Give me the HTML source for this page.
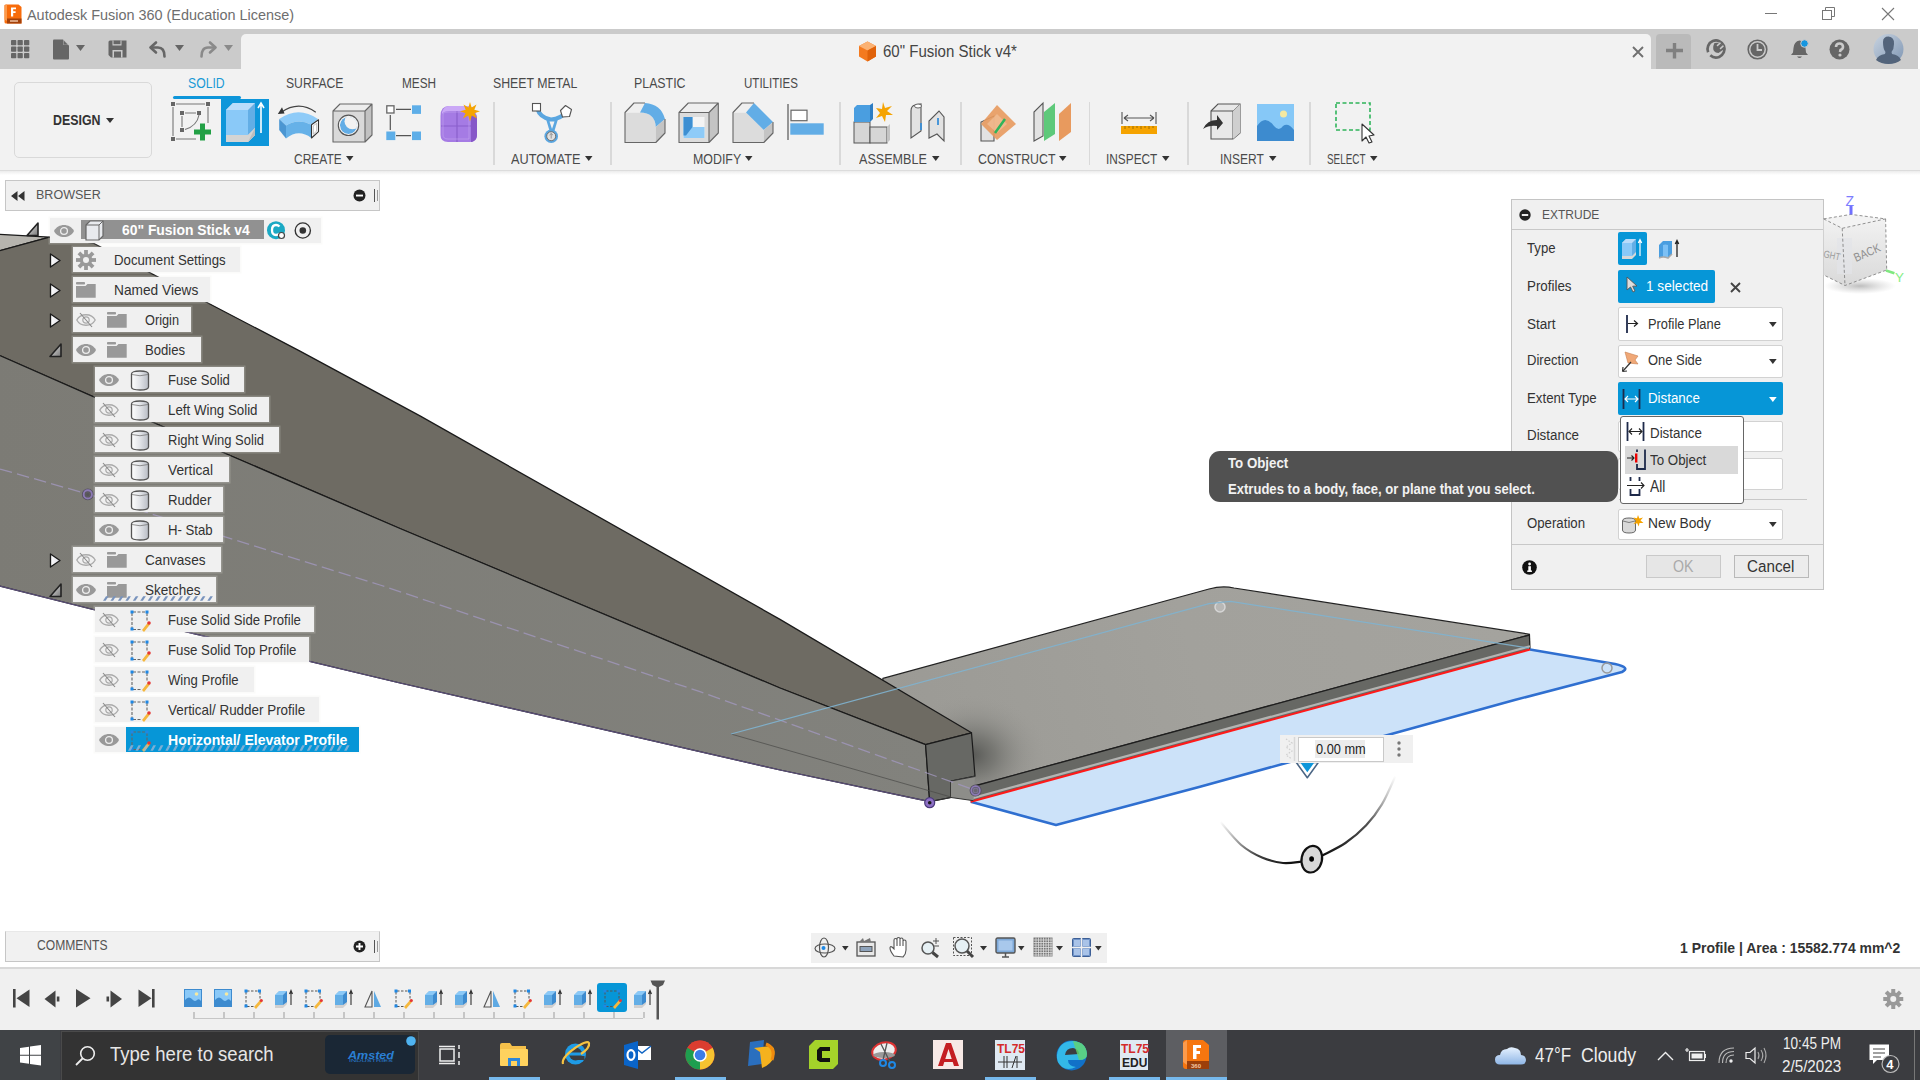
<!DOCTYPE html>
<html><head><meta charset="utf-8">
<style>
*{box-sizing:border-box;margin:0;padding:0}
html,body{width:1920px;height:1080px;overflow:hidden;background:#fff;font-family:"Liberation Sans",sans-serif;color:#333}
.a{position:absolute}
.t{position:absolute;white-space:nowrap;line-height:1}
svg{position:absolute;overflow:visible}
</style></head><body>

<svg class="a" style="left:0;top:0" width="1920" height="1080" viewBox="0 0 1920 1080">
  <defs>
    <linearGradient id="sideG" x1="0" y1="0" x2="1" y2="0">
      <stop offset="0" stop-color="#7c7b75"/><stop offset="1" stop-color="#82827d"/>
    </linearGradient>
    <linearGradient id="stabG" gradientUnits="userSpaceOnUse" x1="900" y1="760" x2="1500" y2="600">
      <stop offset="0" stop-color="#9b9a95"/><stop offset="0.5" stop-color="#a2a19c"/><stop offset="1" stop-color="#a4a39e"/>
    </linearGradient>
    <radialGradient id="shadowG" gradientUnits="userSpaceOnUse" cx="972" cy="755" r="78" gradientTransform="translate(972 755) scale(1 0.8) translate(-972 -755)">
      <stop offset="0" stop-color="#50514e" stop-opacity="0.9"/><stop offset="0.3" stop-color="#60615d" stop-opacity="0.6"/><stop offset="0.65" stop-color="#80807c" stop-opacity="0.25"/><stop offset="1" stop-color="#a19f9a" stop-opacity="0"/>
    </radialGradient>
    <clipPath id="stabClip"><path d="M882.9,678.4 L1209,589 Q1222,585.5 1234,588 L1529.4,634.2 L970.7,787 L880,760 Z"/></clipPath>
    <linearGradient id="arcL" gradientUnits="userSpaceOnUse" x1="1220" y1="822" x2="1290" y2="862">
      <stop offset="0" stop-color="#222" stop-opacity="0"/><stop offset="0.6" stop-color="#222" stop-opacity="0.85"/><stop offset="1" stop-color="#111" stop-opacity="1"/>
    </linearGradient>
    <linearGradient id="arcR" gradientUnits="userSpaceOnUse" x1="1325" y1="855" x2="1396" y2="776">
      <stop offset="0" stop-color="#111" stop-opacity="1"/><stop offset="0.5" stop-color="#333" stop-opacity="0.85"/><stop offset="1" stop-color="#666" stop-opacity="0"/>
    </linearGradient>
  </defs>
  <!-- H-stab top face -->
  <path d="M882.9,678.4 L1209,589 Q1222,585.5 1234,588 L1529.4,634.2 L1529.4,635 L970.7,787 L880,760 Z" fill="url(#stabG)" stroke="#222" stroke-width="1.2"/>
  <g clip-path="url(#stabClip)"><rect x="880" y="680" width="180" height="140" fill="url(#shadowG)"/></g>
  <!-- stab front strip -->
  <path d="M970.7,787 L1529.4,635 L1530,649.5 L970.7,801.7 Z" fill="#676864"/>
  <path d="M970.7,787 L1529.4,635" stroke="#1e1e1e" stroke-width="1.3"/>
  <path d="M1529.4,634.2 L1530,649.5" stroke="#1e1e1e" stroke-width="1.3"/>
  <path d="M970.7,798.6 L1530,646.2" stroke="#b4b4b2" stroke-width="2.2"/>
  <!-- blue profile -->
  <path d="M970.7,801.7 L1530,649.5 L1615,664 Q1631,667.5 1622,672 L1514.6,700 L1200,786.8 L1056,825 Z" fill="#cce2f9"/><path d="M1530,649.5 L1615,664 Q1631,667.5 1622,672 L1514.6,700 L1200,786.8 L1056,825 L970.7,801.7" fill="none" stroke="#2f6fd0" stroke-width="2.6" stroke-linejoin="round"/>
  <path d="M970.7,801.7 L1530,649.5" stroke="#ff1a1a" stroke-width="2.1"/>
  <circle cx="1220" cy="607" r="5" fill="#b8b8b6" stroke="#d6d6d6" stroke-width="1.5"/>
  <circle cx="1607" cy="668" r="5" fill="none" stroke="#9a9a9a" stroke-width="1.5"/>

  <!-- fuselage light top sliver -->
  <path d="M-10,233.8 L49.5,237.2 L-10,253.3 Z" fill="#b6b4ae" stroke="#1a1a1a" stroke-width="1.3"/>
  <!-- fuselage dark face -->
  <path d="M-10,253.3 L49.5,237.2 L93,243 L300,351.1 L420,415.9 L780,619.4 L971.5,732.8 L925.6,744.6 L780,688 L400,528.5 L94.4,397.2 L-10,351.2 Z" fill="#6e6b63" stroke="#1a1a1a" stroke-width="1.3" stroke-linejoin="round"/>
  <!-- fuselage side face -->
  <path d="M-10,351.2 L94.4,397.2 L400,528.5 L780,688 L925.6,744.6 L929.7,801.7 L780,770 L400,683 L95,610 L-10,583.5 Z" fill="url(#sideG)" stroke="#1a1a1a" stroke-width="1.2" stroke-linejoin="round"/>
  <path d="M-10,583.5 L95,610 L400,683 L780,770 L929.7,801.7" fill="none" stroke="#5b4f7a" stroke-width="1.2"/>
  <!-- end face -->
  <path d="M925.6,744.6 L971.5,732.8 L975,776.2 L951,781 L951,797.5 L929.7,801.7 Z" fill="#676864" stroke="#1a1a1a" stroke-width="1.2" stroke-linejoin="round"/>
  <path d="M951,781 L975,776.2 L973.5,800.7 L951,797.5 Z" fill="#8d8d89"/>
  <path d="M951,781 L975,776.5" stroke="#333" stroke-width="1"/>
  <path d="M929.7,801.7 L951,797.5 L973.5,800.7" fill="none" stroke="#333" stroke-width="1"/>
  <!-- sketch plane lines in side face -->
  <path d="M731,734 L951,797" stroke="#4a4a48" stroke-width="1" opacity="0.7"/>
  <path d="M0,469 L87.5,494 L380,585 L700,691.7 L780,720.2 L975.6,790.5" fill="none" stroke="#a197bd" stroke-width="1.3" stroke-dasharray="12.5,5.2" opacity="0.8"/>
  <circle cx="87.8" cy="494.4" r="4.3" fill="#5e5c60" stroke="#55505f" stroke-width="3.2"/><circle cx="87.8" cy="494.4" r="4.1" fill="none" stroke="#8c7ab4" stroke-width="1.9"/><circle cx="87.8" cy="494.4" r="1.5" fill="#555"/>
  <circle cx="929.7" cy="802.7" r="5" fill="#8c6fc4" stroke="#4b3a7a" stroke-width="1.2"/>
  <circle cx="929.7" cy="802.7" r="1.8" fill="#1a1a1a"/>
  <circle cx="975.6" cy="790.5" r="4.5" fill="#7a7490" stroke="#55505f" stroke-width="3"/><circle cx="975.6" cy="790.5" r="4.3" fill="none" stroke="#8c7ab4" stroke-width="1.7"/><circle cx="975.6" cy="790.5" r="1.8" fill="#6a6670"/>
  <path d="M731,734 L1209,603.7 L1230.6,601.3 L1529,648" fill="none" stroke="#7fb2cf" stroke-width="1.2" opacity="0.9"/>

  <!-- arc manipulator -->
  <path d="M1220.4,822.0 C1223.9,825.8 1234.3,839.1 1241.2,845.0 C1248.2,850.9 1255.0,854.5 1262.0,857.5 C1269.0,860.5 1276.5,862.3 1283.0,863.0 C1289.5,863.7 1298.0,861.9 1301.0,861.7" fill="none" stroke="url(#arcL)" stroke-width="2.2"/>
  <path d="M1322.5,855.4 C1326.3,853.3 1338.1,848.0 1345.4,843.0 C1352.7,838.0 1360.2,831.6 1366.2,825.2 C1372.3,818.8 1377.0,812.6 1381.9,804.4 C1386.8,796.2 1393.2,780.9 1395.4,776.2" fill="none" stroke="url(#arcR)" stroke-width="2.2"/>
  <ellipse cx="1311.8" cy="859.2" rx="10.2" ry="13.4" fill="#d8d8d8" stroke="#111" stroke-width="2.2" transform="rotate(12 1311.8 859.2)"/>
  <ellipse cx="1311.6" cy="859" rx="2.4" ry="2.8" fill="#000"/>
  <path d="M1296.3,762.5 L1318.3,762.5 L1307.3,777.8 Z" fill="#fff" stroke="#4a6584" stroke-width="1.5" stroke-linejoin="round"/>
  <path d="M1300.3,762.5 L1314.3,762.5 L1307.3,772.3 Z" fill="#0e96da"/>
</svg>

<svg width="0" height="0" style="position:absolute"><defs><linearGradient id="bodyg" x1="0" y1="0" x2="1" y2="0"><stop offset="0" stop-color="#fff"/><stop offset="0.5" stop-color="#e2e4e8"/><stop offset="1" stop-color="#b8bcc4"/></linearGradient><linearGradient id="trig" x1="0" y1="0" x2="1" y2="1"><stop offset="0" stop-color="#eee"/><stop offset="1" stop-color="#777"/></linearGradient><linearGradient id="trir" x1="0" y1="0" x2="1" y2="0"><stop offset="0" stop-color="#fff"/><stop offset="1" stop-color="#dcdce4"/></linearGradient></defs></svg>
<div class="a" style="left:0px;top:0px;width:1920px;height:29px;background:#ffffff;"></div>
<svg style="left:3px;top:4px" width="19" height="20" viewBox="0 0 19 20">
      <path d="M1.5,1.5 Q1.5,0.5 3,0.5 L15.5,0.5 L18.5,3 L18.5,19.5 L3,19.5 Q1.5,19.5 1.5,18 Z" fill="#f86c0b"/>
      <path d="M1.5,1.5 L4,0.5 L4,17 L1.5,15.5 Z" fill="#fb9a4c"/>
      <rect x="4" y="14.5" width="14.5" height="5" fill="#a3410a"/>
      <path d="M8,3.5 L13,3.5 L13,5.3 L10.2,5.3 L10.2,7.3 L12.6,7.3 L12.6,9 L10.2,9 L10.2,12.5 L8,12.5 Z" fill="#fff"/>
      <rect x="7" y="16.2" width="8" height="1.6" fill="#e8b898"/></svg>
<div class="t" style="left:27.40px;top:6.89px;font-size:15.22px;color:#6e6e6e;transform:scaleX(0.9479);transform-origin:0 0;">Autodesk Fusion 360 (Education License)</div>
<div class="a" style="left:1765px;top:13px;width:12px;height:1px;background:#777;"></div>
<svg style="left:1822px;top:7px" width="14" height="14" viewBox="0 0 14 14"><rect x="0.5" y="3.5" width="9" height="9" fill="none" stroke="#777"/><path d="M3.5,3.5 L3.5,0.5 L12.5,0.5 L12.5,9.5 L9.5,9.5" fill="none" stroke="#777"/></svg>
<svg style="left:1881px;top:7px" width="14" height="14" viewBox="0 0 14 14"><path d="M1,1 L13,13 M13,1 L1,13" stroke="#777" stroke-width="1.1"/></svg>
<div class="a" style="left:0px;top:29px;width:1920px;height:40px;background:#cbcbcb;"></div>
<div class="a" style="left:1918px;top:29px;width:2px;height:40px;background:#ffffff;"></div>
<svg style="left:11px;top:40px" width="19" height="19" viewBox="0 0 19 19"><rect x="0.0" y="0.0" width="5.3" height="5.3" rx="0.8" fill="#666"/><rect x="6.5" y="0.0" width="5.3" height="5.3" rx="0.8" fill="#666"/><rect x="13.0" y="0.0" width="5.3" height="5.3" rx="0.8" fill="#666"/><rect x="0.0" y="6.5" width="5.3" height="5.3" rx="0.8" fill="#666"/><rect x="6.5" y="6.5" width="5.3" height="5.3" rx="0.8" fill="#666"/><rect x="13.0" y="6.5" width="5.3" height="5.3" rx="0.8" fill="#666"/><rect x="0.0" y="13.0" width="5.3" height="5.3" rx="0.8" fill="#666"/><rect x="6.5" y="13.0" width="5.3" height="5.3" rx="0.8" fill="#666"/><rect x="13.0" y="13.0" width="5.3" height="5.3" rx="0.8" fill="#666"/></svg>
<svg style="left:52px;top:39px" width="18" height="21" viewBox="0 0 18 21"><path d="M1,1.5 Q1,0.5 2,0.5 L11,0.5 L17,6.5 L17,19.5 Q17,20.5 16,20.5 L2,20.5 Q1,20.5 1,19.5 Z" fill="#666"/><path d="M11.5,0.5 L11.5,6 L17,6" fill="#cbcbcb"/><path d="M11.8,1.5 L16,5.7 L11.8,5.7 Z" fill="#666"/></svg>
<svg style="left:76px;top:45px" width="9" height="6" viewBox="0 0 9 6"><path d="M0,0 L9,0 L4.5,6 Z" fill="#666"/></svg>
<svg style="left:108px;top:40px" width="19" height="18" viewBox="0 0 19 18"><path d="M0.5,2 Q0.5,0.5 2,0.5 L18.5,0.5 L18.5,17.5 L3,17.5 L0.5,15 Z" fill="#666"/><rect x="4.5" y="0.5" width="9" height="5" fill="#cbcbcb"/><rect x="5.5" y="0.5" width="7" height="3.7" fill="#666"/><rect x="4.5" y="10" width="10" height="7.5" fill="#cbcbcb"/><rect x="6" y="11.5" width="7" height="6" fill="#666"/></svg>
<svg style="left:149px;top:41px" width="18" height="17" viewBox="0 0 18 17"><path d="M7,1.5 L1.5,6.5 L7,11.5" fill="none" stroke="#666" stroke-width="2.6" stroke-linejoin="round" stroke-linecap="round"/><path d="M2,6.5 L9,6.5 Q15.5,6.5 15.5,15.5" fill="none" stroke="#666" stroke-width="2.6" stroke-linecap="round"/></svg>
<svg style="left:175px;top:45px" width="9" height="6" viewBox="0 0 9 6"><path d="M0,0 L9,0 L4.5,6 Z" fill="#666"/></svg>
<svg style="left:199px;top:41px" width="18" height="17" viewBox="0 0 18 17"><path d="M11,1.5 L16.5,6.5 L11,11.5" fill="none" stroke="#8a8a8a" stroke-width="2.6" stroke-linejoin="round" stroke-linecap="round"/><path d="M16,6.5 L9,6.5 Q2.5,6.5 2.5,15.5" fill="none" stroke="#8a8a8a" stroke-width="2.6" stroke-linecap="round"/></svg>
<svg style="left:224px;top:45px" width="9" height="6" viewBox="0 0 9 6"><path d="M0,0 L9,0 L4.5,6 Z" fill="#8a8a8a"/></svg>
<div class="a" style="left:241px;top:34px;width:1410px;height:40px;background:#f2f2f2;border-radius:5px 5px 0 0"></div>
<svg style="left:858px;top:41px" width="19" height="21" viewBox="0 0 19 21"><path d="M9.5,0.5 L18,5 L18,15.5 L9.5,20.5 L1,15.5 L1,5 Z" fill="#f47a1f"/><path d="M9.5,0.5 L18,5 L9.5,9.5 L1,5 Z" fill="#fbb274"/><path d="M9.5,9.5 L18,5 L18,15.5 L9.5,20.5 Z" fill="#e0620a"/></svg>
<div class="t" style="left:883.00px;top:44.47px;font-size:15.65px;color:#454545;transform:scaleX(0.9608);transform-origin:0 0;">60&quot; Fusion Stick v4*</div>
<svg style="left:1632px;top:46px" width="12" height="12" viewBox="0 0 12 12"><path d="M1,1 L11,11 M11,1 L1,11" stroke="#707070" stroke-width="1.9"/></svg>
<div class="a" style="left:1656px;top:34px;width:35px;height:35px;background:#bababa;border-radius:4px 4px 0 0"></div>
<svg style="left:1666px;top:42px" width="17" height="17" viewBox="0 0 17 17"><path d="M8.5,1 V16.5 M0,8.5 H17" stroke="#808080" stroke-width="3.4"/></svg>
<svg style="left:1706px;top:39px" width="21" height="21" viewBox="0 0 21 21"><circle cx="10" cy="10" r="8.5" fill="none" stroke="#666" stroke-width="2.7" stroke-dasharray="49.2 4.2" transform="rotate(158 10 10)"/><path d="M8.5,4 Q14,2.5 17.5,7 L17.5,10.5 L12.5,14 Q9.5,14 8,12 Q6,8.5 8.5,4 Z" fill="#666"/><path d="M11.5,6.5 L14,4.2 M14.5,9.5 L17,7.2" stroke="#cbcbcb" stroke-width="1.6" stroke-linecap="round"/></svg>
<svg style="left:1747px;top:39px" width="21" height="21" viewBox="0 0 21 21"><circle cx="10.5" cy="10.5" r="9.3" fill="none" stroke="#666" stroke-width="1.6"/><circle cx="10.5" cy="10.5" r="7" fill="#666"/><path d="M10.5,5 V11 H15" fill="none" stroke="#cbcbcb" stroke-width="1.8"/></svg>
<svg style="left:1790px;top:39px" width="19" height="21" viewBox="0 0 19 21"><path d="M9.5,1.5 Q4,2.5 3.5,9 L3,13.5 L1,16 L18,16 L16,13.5 L15.5,9 Q15,2.5 9.5,1.5 Z" fill="#666"/><path d="M7,17.5 Q9.5,20.5 12,17.5 Z" fill="#666"/><circle cx="14.5" cy="4.5" r="3.8" fill="#1696e0" stroke="#cbcbcb" stroke-width="1"/></svg>
<svg style="left:1829px;top:39px" width="21" height="21" viewBox="0 0 21 21"><circle cx="10.5" cy="10.5" r="10" fill="#666"/><path d="M7,8 Q7,4.5 10.5,4.5 Q14,4.5 14,7.8 Q14,10 11.5,11 L11,13" fill="none" stroke="#cbcbcb" stroke-width="2.6"/><circle cx="11" cy="16" r="1.6" fill="#cbcbcb"/></svg>
<svg style="left:1873px;top:34px" width="31" height="30" viewBox="0 0 31 30"><defs><linearGradient id="avg" x1="0" y1="0" x2="1" y2="1"><stop offset="0" stop-color="#c8d3e0"/><stop offset="1" stop-color="#7f96b3"/></linearGradient></defs><circle cx="15.5" cy="15" r="15" fill="url(#avg)"/><path d="M10,8 Q10,2.5 15.5,2.5 Q21.5,3 21,10 Q21,15 18.5,18 L19,20 Q26,21 28,26 Q23,30 15.5,30 Q8,30 3,26 Q5,21 12,20 L12.5,18 Q10,15 10,8 Z" fill="#53647b"/></svg>
<div class="a" style="left:0px;top:69px;width:1920px;height:101px;background:#f2f2f2;"></div>
<div class="a" style="left:0px;top:170px;width:1920px;height:1px;background:#dcdcdc;"></div>
<div class="a" style="left:0px;top:171px;width:1920px;height:4px;background:linear-gradient(#ececec,#ffffff);"></div>
<div class="a" style="left:14px;top:82px;width:138px;height:76px;background:#f2f2f2;border:1.5px solid #d9d9d9;border-radius:5px"></div>
<div class="t" style="left:52.50px;top:112.75px;font-size:14.49px;color:#333;font-weight:700;transform:scaleX(0.8557);transform-origin:0 0;">DESIGN</div>
<svg style="left:106px;top:118px" width="8" height="5" viewBox="0 0 8 5"><path d="M0,0 L8,0 L4.0,5 Z" fill="#333"/></svg>
<div class="t" style="left:188.30px;top:75.55px;font-size:14.49px;color:#1a9ad6;transform:scaleX(0.8441);transform-origin:0 0;">SOLID</div>
<div class="t" style="left:285.70px;top:75.55px;font-size:14.49px;color:#4a4a4a;transform:scaleX(0.8391);transform-origin:0 0;">SURFACE</div>
<div class="t" style="left:401.50px;top:75.55px;font-size:14.49px;color:#4a4a4a;transform:scaleX(0.8142);transform-origin:0 0;">MESH</div>
<div class="t" style="left:492.70px;top:75.55px;font-size:14.49px;color:#4a4a4a;transform:scaleX(0.8492);transform-origin:0 0;">SHEET METAL</div>
<div class="t" style="left:634.20px;top:75.55px;font-size:14.49px;color:#4a4a4a;transform:scaleX(0.8538);transform-origin:0 0;">PLASTIC</div>
<div class="t" style="left:744.20px;top:75.55px;font-size:14.49px;color:#4a4a4a;transform:scaleX(0.7964);transform-origin:0 0;">UTILITIES</div>
<div class="a" style="left:173px;top:95.6px;width:68px;height:3.8px;background:#0e96da;border-radius:2px"></div>
<div class="t" style="left:294.30px;top:151.50px;font-size:14.49px;color:#4a4a4a;transform:scaleX(0.8270);transform-origin:0 0;">CREATE</div>
<svg style="left:346.4px;top:156px" width="7.5" height="5" viewBox="0 0 7.5 5"><path d="M0,0 L7.5,0 L3.75,5 Z" fill="#333"/></svg>
<div class="t" style="left:511.30px;top:151.50px;font-size:14.49px;color:#4a4a4a;transform:scaleX(0.8783);transform-origin:0 0;">AUTOMATE</div>
<svg style="left:585px;top:156px" width="7.5" height="5" viewBox="0 0 7.5 5"><path d="M0,0 L7.5,0 L3.75,5 Z" fill="#333"/></svg>
<div class="t" style="left:692.80px;top:151.50px;font-size:14.49px;color:#4a4a4a;transform:scaleX(0.8550);transform-origin:0 0;">MODIFY</div>
<svg style="left:745px;top:156px" width="7.5" height="5" viewBox="0 0 7.5 5"><path d="M0,0 L7.5,0 L3.75,5 Z" fill="#333"/></svg>
<div class="t" style="left:859.00px;top:151.50px;font-size:14.49px;color:#4a4a4a;transform:scaleX(0.8692);transform-origin:0 0;">ASSEMBLE</div>
<svg style="left:932px;top:156px" width="7.5" height="5" viewBox="0 0 7.5 5"><path d="M0,0 L7.5,0 L3.75,5 Z" fill="#333"/></svg>
<div class="t" style="left:977.70px;top:151.50px;font-size:14.49px;color:#4a4a4a;transform:scaleX(0.8515);transform-origin:0 0;">CONSTRUCT</div>
<svg style="left:1059px;top:156px" width="7.5" height="5" viewBox="0 0 7.5 5"><path d="M0,0 L7.5,0 L3.75,5 Z" fill="#333"/></svg>
<div class="t" style="left:1106.00px;top:151.50px;font-size:14.49px;color:#4a4a4a;transform:scaleX(0.8175);transform-origin:0 0;">INSPECT</div>
<svg style="left:1162px;top:156px" width="7.5" height="5" viewBox="0 0 7.5 5"><path d="M0,0 L7.5,0 L3.75,5 Z" fill="#333"/></svg>
<div class="t" style="left:1219.70px;top:151.50px;font-size:14.49px;color:#4a4a4a;transform:scaleX(0.8280);transform-origin:0 0;">INSERT</div>
<svg style="left:1268.7px;top:156px" width="7.5" height="5" viewBox="0 0 7.5 5"><path d="M0,0 L7.5,0 L3.75,5 Z" fill="#333"/></svg>
<div class="t" style="left:1326.50px;top:151.50px;font-size:14.49px;color:#4a4a4a;transform:scaleX(0.6829);transform-origin:0 0;">SELECT</div>
<svg style="left:1370px;top:156px" width="7.5" height="5" viewBox="0 0 7.5 5"><path d="M0,0 L7.5,0 L3.75,5 Z" fill="#333"/></svg>
<div class="a" style="left:493px;top:102px;width:1.5px;height:63px;background:#d9d9d9;"></div>
<div class="a" style="left:610px;top:102px;width:1.5px;height:63px;background:#d9d9d9;"></div>
<div class="a" style="left:839px;top:102px;width:1.5px;height:63px;background:#d9d9d9;"></div>
<div class="a" style="left:960px;top:102px;width:1.5px;height:63px;background:#d9d9d9;"></div>
<div class="a" style="left:1088.5px;top:102px;width:1.5px;height:63px;background:#d9d9d9;"></div>
<div class="a" style="left:1187px;top:102px;width:1.5px;height:63px;background:#d9d9d9;"></div>
<div class="a" style="left:1309px;top:102px;width:1.5px;height:63px;background:#d9d9d9;"></div>
<svg style="left:171px;top:102px" width="41" height="41" viewBox="0 0 41 41"><g fill="#666"><rect x="0" y="0" width="4" height="4"/><rect x="35" y="0" width="4" height="4"/><rect x="0" y="35" width="4" height="4"/>
      <rect x="9" y="9" width="4" height="4"/><rect x="26" y="9" width="4" height="4"/><rect x="9" y="26" width="4" height="4"/></g>
      <path d="M5,2 H34 M2,5 V34 M5,37 H25 M37,5 V21 M14,11 H25 M11,14 V25 M14,27.5 Q26,24 28,13" fill="none" stroke="#777" stroke-width="1.1"/>
      <path d="M23,30 H40 M31.5,21.5 V38.5" stroke="#22a045" stroke-width="5"/></svg>
<div class="a" style="left:221px;top:99px;width:48px;height:47px;background:#0e96da;"></div>
<svg style="left:221px;top:99px" width="48" height="47" viewBox="0 0 48 47"><path d="M5,11 L12,4 L34,4 L34,36 L27,43 L5,43 Z" fill="#d8d8d8"/>
      <path d="M5,11 L12,4 L34,4 L27,11 Z" fill="#b9dcfb"/><path d="M5,11 L27,11 L27,36 L5,36 Z" fill="#8ac9f8"/><path d="M27,11 L34,4 L34,29 L27,36 Z" fill="#63aee6"/>
      <path d="M5,36 L27,36 L34,29 L34,36 L27,43 L5,43 Z" fill="#d4d4d4"/><path d="M27,43 L34,36 L34,29 Z" fill="#bdbdbd"/>
      <path d="M40,34 V6 M37,9 L40,4 L43,9" fill="none" stroke="#fff" stroke-width="1.6"/></svg>
<svg style="left:277px;top:103px" width="44" height="38" viewBox="0 0 44 38"><path d="M4,9.5 Q21.6,-3 38.8,9.2" fill="none" stroke="#444" stroke-width="1.3"/><path d="M0.8,11 L5,4.3 L7.5,10.5 Z" fill="#333"/>
      <path d="M2.2,16 Q21.6,2.4 41,16 L34.25,21.8 Q21.6,14.7 9,22.4 Z" fill="#8ecbf8"/>
      <path d="M9,22.4 Q21.6,14.7 34.25,21.8 L34.25,35 Q21.6,25.5 9,35.5 Z" fill="#66b1e8"/>
      <path d="M2.2,16 L9,22.4 L9,35.5 L2.2,27 Z" fill="#4b96d2"/>
      <path d="M34.5,21.8 L41.5,16.8 L41.5,28.6 L34.5,35 Z" fill="#fff" stroke="#333" stroke-width="1.1" stroke-linejoin="round"/><path d="M36.3,22.8 L39.7,20.3 L39.7,28 L36.3,31.2 Z" fill="none" stroke="#999" stroke-width="0.6"/></svg>
<svg style="left:332px;top:103px" width="41" height="40" viewBox="0 0 41 40"><defs><clipPath id="hc"><circle cx="16.5" cy="22.3" r="8.6"/></clipPath></defs>
      <path d="M1,8 L8,1 L40,1 L40,32 L33,39 L1,39 Z" fill="#d9d9d9"/><path d="M33,8 L40,1 L40,32 L33,39 Z" fill="#c2c2c2"/><path d="M1,8 L33,8 L40,1 L8,1 Z" fill="#ededed"/>
      <path d="M1,8 L8,1 L40,1 L40,32 L33,39 L1,39 Z M1,8 L33,8 L40,1 M33,8 V39" fill="none" stroke="#666" stroke-width="1.1" stroke-linejoin="round"/>
      <circle cx="16.5" cy="22.3" r="10.2" fill="#f2f2f2" stroke="#555" stroke-width="1.1"/>
      <g clip-path="url(#hc)"><circle cx="16.5" cy="22.3" r="8.6" fill="#62ade6"/><circle cx="20.5" cy="18.3" r="8" fill="#f2f2f2"/></g></svg>
<svg style="left:385px;top:104px" width="38" height="34" viewBox="0 0 38 34"><path d="M11,5.3 H26 M5.3,11 V26 M11,31.7 H26" stroke="#555" stroke-width="1.2"/>
      <rect x="1.8" y="1.8" width="7.2" height="7.2" fill="#fff" stroke="#666" stroke-width="1.3"/><rect x="27" y="1.3" width="9" height="8.6" fill="#5eaee8"/><rect x="1.3" y="27.5" width="9" height="8.6" fill="#5eaee8"/><rect x="27" y="27.5" width="9" height="8.6" fill="#5eaee8"/></svg>
<svg style="left:439px;top:102px" width="42" height="42" viewBox="0 0 42 42"><path d="M1.5,14 Q1.5,4 10,4 L27,4 Q35,4 36,10 L38,14 L38,33 Q38,40 31,40 L9,40 Q1.5,40 1.5,33 Z" fill="#a57be4"/>
      <path d="M3,10 Q5,4 10,4 L27,4 Q33,4 35,9 L10,9 Q5,9 3,12 Z" fill="#caa8f6"/>
      <path d="M32,12 L38,16 L38,33 Q38,38 33,40 L32,40 Z" fill="#8758c8"/>
      <path d="M18,9 V40 M2,24 H32" stroke="#8a5fcc" stroke-width="1.2"/>
      <path d="M4,13 Q4,10 9,10 L30,10 L30,37 L9,37 Q4,37 4,33 Z" fill="none" stroke="#c6a8f0" stroke-width="0.8" opacity="0.7"/>
      <path d="M31,0 L32.6,5.5 L37.5,2.5 L35.3,7.8 L41,9.2 L35.5,11.2 L38,16.5 L32.8,13.5 L31,19.5 L29.2,13.5 L24,16.5 L26.5,11.2 L21,9.2 L26.7,7.8 L24.5,2.5 L29.4,5.5 Z" fill="#f5a400"/></svg>
<svg style="left:531px;top:102px" width="42" height="42" viewBox="0 0 42 42"><path d="M6,6 Q9,16 20,17.5 Q30,17 36,9" fill="none" stroke="#5aa6e0" stroke-width="4.2" stroke-linecap="round"/>
      <path d="M15,17 L27,17 L22.5,32 L19.5,32 Z" fill="#5aa6e0"/><path d="M18.5,19.5 L23.5,19.5 L21,27 Z" fill="#f2f2f2"/>
      <rect x="1.5" y="1.5" width="8" height="7.5" fill="#fff" stroke="#555" stroke-width="1.1"/>
      <path d="M34.5,3.5 L40.5,7.5 L38.5,14.5 L31.5,15 L29.5,8.5 Z" fill="#fff" stroke="#555" stroke-width="1.1" stroke-linejoin="round"/>
      <circle cx="20.2" cy="34.2" r="6.8" fill="#5aa6e0"/><circle cx="20.2" cy="34.2" r="4.5" fill="#e0e0e0" stroke="#666" stroke-width="0.9"/><path d="M20.2,31.5 V36.5 M18.5,33 L20.2,31.5 L21.9,33" fill="none" stroke="#777" stroke-width="0.7"/></svg>
<svg style="left:624px;top:102px" width="42" height="42" viewBox="0 0 42 42"><path d="M1,10.5 L16,10.5 Q31,10.5 31.8,25 L31.8,40.5 L1,40.5 Z" fill="#dcdcdc"/><path d="M1,10.5 L10,1 L21,1 L16,10.5 Z" fill="#efefef"/>
      <path d="M21,1 Q37,2 41,17 L31.8,25 Q31,10.5 16,10.5 Z" fill="#62ade6"/><path d="M31.8,25 L41,17 L41,31 L31.8,40.5 Z" fill="#c4c4c4"/>
      <path d="M21,1 L10,1 L1,10.5 L1,40.5 L31.8,40.5 L41,31 L41,17" fill="none" stroke="#666" stroke-width="1.1" stroke-linejoin="round"/></svg>
<svg style="left:678px;top:102px" width="42" height="42" viewBox="0 0 42 42"><path d="M1,10.5 L31,10.5 L31,40.5 L1,40.5 Z" fill="#dcdcdc"/><path d="M1,10.5 L10.3,1 L40.3,1 L31,10.5 Z" fill="#efefef"/><path d="M31,10.5 L40.3,1 L40.3,31 L31,40.5 Z" fill="#c4c4c4"/>
      <path d="M1,10.5 L10.3,1 L40.3,1 L40.3,31 L31,40.5 L1,40.5 Z M1,10.5 L31,10.5 L40.3,1 M31,10.5 V40.5" fill="none" stroke="#666" stroke-width="1.1" stroke-linejoin="round"/>
      <rect x="5.5" y="15" width="21" height="21" fill="#f4f4f4"/><path d="M5.5,36 L5.5,15 L14.5,15 L14.5,25 L26.5,25 L26.5,36 Z" fill="#8ecbf8"/><path d="M5.5,33.5 L5.5,15 L14.5,15 L14.5,25 L8,33.5 Z" fill="#3d8fd2"/></svg>
<svg style="left:732px;top:102px" width="42" height="42" viewBox="0 0 42 42"><path d="M1,10.5 L14,10.5 L31.8,28 L31.8,40.5 L1,40.5 Z" fill="#dcdcdc"/><path d="M1,10.5 L10,1 L22,1 L14,10.5 Z" fill="#efefef"/>
      <path d="M22,1 L41,20 L31.8,28 L14,10.5 Z" fill="#62ade6"/><path d="M31.8,28 L41,20 L41,31 L31.8,40.5 Z" fill="#c4c4c4"/>
      <path d="M22,1 L10,1 L1,10.5 L1,40.5 L31.8,40.5 L41,31 L41,20" fill="none" stroke="#666" stroke-width="1.1" stroke-linejoin="round"/></svg>
<svg style="left:787px;top:103px" width="38" height="38" viewBox="0 0 38 38"><path d="M1,1 V37" stroke="#555" stroke-width="1.2"/><rect x="4" y="7.2" width="16" height="10.5" fill="#fff" stroke="#666" stroke-width="1.2"/><rect x="3.3" y="20.3" width="33.4" height="11.4" fill="#62ade6"/></svg>
<svg style="left:853px;top:102px" width="41" height="42" viewBox="0 0 41 42"><rect x="1" y="20" width="16" height="21" fill="#d6d6d6" stroke="#555" stroke-width="1"/><rect x="17" y="25" width="17" height="16" fill="#d6d6d6" stroke="#555" stroke-width="1"/>
      <path d="M1,6 L4,3 L17,3 L17,20 L1,20 Z" fill="#4a9ee0"/><path d="M17,3 L20,1 L20,17 L17,20 Z" fill="#2d7dc4"/><path d="M34,25 L37,22 L37,38 L34,41 Z" fill="#c4c4c4"/>
      <path d="M30,0 L32,6 L39,4 L34,9 L40,13 L33,13 L32,20 L29,14 L23,16 L27,11 L23,6 L29,7 Z" fill="#f5a300"/></svg>
<svg style="left:909px;top:103px" width="37" height="38" viewBox="0 0 37 38"><path d="M2,35 L2,8 Q2,3 6,2 L12,1 L12,28 Z" fill="#e2e2e2" stroke="#555" stroke-width="1.1"/><ellipse cx="9" cy="3" rx="3.5" ry="2" fill="#fff" stroke="#555" stroke-width="0.9"/>
      <path d="M20,35 L20,18 L30,8 L35,14 L35,38 L28,31 Z" fill="#e2e2e2" stroke="#555" stroke-width="1.1"/><path d="M12,27 V20 M29,15 V22" stroke="#3a8fd8" stroke-width="1.8"/></svg>
<svg style="left:979px;top:103px" width="37" height="38" viewBox="0 0 37 38"><path d="M2,38 L2,19 L15,13 L15,38 Z" fill="#e2e2e2" stroke="#555" stroke-width="1.1"/>
      <path d="M2,21 L18,2 L37,21 L18,37 Z" fill="#e89a5e" opacity="0.9"/><path d="M8,21 L18,11 L28,21 L18,30 Z" fill="#f1c09a" opacity="0.7"/><path d="M16,30 L26,16" stroke="#2fb45a" stroke-width="2.5"/></svg>
<svg style="left:1033px;top:102px" width="39" height="40" viewBox="0 0 39 40"><path d="M1,39 L1,10 L10,1 L10,34 Z" fill="#e2e2e2" stroke="#555" stroke-width="1.1"/><path d="M11,39 L11,10 L22,1 L22,32 Z" fill="#5ec97a"/><path d="M26,39 L26,12 L38,1 L38,30 Z" fill="#e89a5e"/></svg>
<svg style="left:1121px;top:112px" width="36" height="22" viewBox="0 0 36 22"><path d="M1,0 V12 M35,0 V12 M3,6 H33 M3,6 L7,3 M3,6 L7,9 M33,6 L29,3 M33,6 L29,9" fill="none" stroke="#555" stroke-width="1.1"/>
      <rect x="0" y="14" width="36" height="8" fill="#f5a300"/><path d="M4,14 V17 M8,14 V16 M12,14 V17 M16,14 V16 M20,14 V17 M24,14 V16 M28,14 V17 M32,14 V16" stroke="#8a6200" stroke-width="0.8"/></svg>
<svg style="left:1203px;top:103px" width="38" height="37" viewBox="0 0 38 37"><path d="M8,8 L15,1 L37,1 L37,30 L30,36 L8,36 Z" fill="#e8e8e8" stroke="#555" stroke-width="1.1"/><path d="M8,8 L30,8 L37,1 M30,8 V36" fill="none" stroke="#555" stroke-width="1"/><path d="M30,8 L37,1 L37,30 L30,36 Z" fill="#cfcfcf"/>
      <path d="M0,26 Q4,17 14,17 L14,12 L20,20 L14,27 L14,23 Q6,22 0,26 Z" fill="#333"/></svg>
<svg style="left:1257px;top:104px" width="37" height="37" viewBox="0 0 37 37"><rect x="0" y="0" width="37" height="37" fill="#86c8f7"/><path d="M0,37 L0,22 Q8,10 17,22 Q22,28 26,22 Q31,18 37,26 L37,37 Z" fill="#3d8bcf"/><circle cx="26.5" cy="10" r="3.5" fill="#f5e9a0"/></svg>
<svg style="left:1335px;top:102px" width="42" height="41" viewBox="0 0 42 41"><rect x="1" y="1" width="34" height="27" fill="none" stroke="#2fb45a" stroke-width="1.6" stroke-dasharray="4,2.5"/>
      <path d="M27,22 L27,39 L31,35 L34,41 L37,40 L34,34 L39,33 Z" fill="#fff" stroke="#333" stroke-width="1.1" stroke-linejoin="round"/></svg>
<div class="a" style="left:5px;top:180px;width:375px;height:31px;background:#f0f0f0;border:1px solid #c6c6c6"></div>
<svg style="left:11px;top:191px" width="14" height="10" viewBox="0 0 14 10"><path d="M6.5,0 L0,5 L6.5,10 Z M13.5,0 L7,5 L13.5,10 Z" fill="#333"/></svg>
<div class="t" style="left:36.30px;top:188.43px;font-size:13.33px;color:#555;transform:scaleX(0.9400);transform-origin:0 0;">BROWSER</div>
<svg style="left:353px;top:189px" width="13" height="13" viewBox="0 0 13 13"><circle cx="6.5" cy="6.5" r="6" fill="#222"/><rect x="3" y="5.6" width="7" height="1.9" fill="#fff"/></svg>
<div class="a" style="left:374px;top:189px;width:1px;height:13px;background:#555;"></div>
<div class="a" style="left:376.5px;top:190px;width:1px;height:11px;background:#999;"></div>
<svg style="left:26px;top:222px" width="14" height="15" viewBox="0 0 14 15"><path d="M12,1 L12,13.5 L1,13.5 Z" fill="url(#trig)" stroke="#222" stroke-width="1.6" stroke-linejoin="round"/></svg>
<div class="a" style="left:50px;top:217.5px;width:271px;height:25px;background:#f0f0f0;box-shadow:0 0 0 1.5px rgba(235,235,230,0.22)"></div>
<svg style="left:53.7px;top:224.5px" width="20" height="12" viewBox="0 0 20 12"><path d="M0,6 C4,-2 16,-2 20,6 C16,14 4,14 0,6 Z" fill="#999"/><circle cx="10" cy="6" r="3.4" fill="none" stroke="#eee" stroke-width="1.3"/></svg>
<div class="a" style="left:81px;top:219.8px;width:182.5px;height:19.6px;background:#919191;"></div>
<svg style="left:84px;top:219.5px" width="21" height="21" viewBox="0 0 21 21"><path d="M2,5 L6,1 L19,1 L19,16 L15,20 L2,20 Z" fill="#e8eaee" stroke="#666" stroke-width="1.2"/><path d="M2,5 L15,5 L19,1 M15,5 V20" fill="none" stroke="#666" stroke-width="1"/></svg>
<div class="t" style="left:122.20px;top:222.95px;font-size:14.49px;color:#fff;font-weight:700;transform:scaleX(0.9585);transform-origin:0 0;">60&quot; Fusion Stick v4</div>
<svg style="left:267px;top:221px" width="19" height="19" viewBox="0 0 19 19"><circle cx="9" cy="9.2" r="9" fill="#1ba9c4"/><path d="M12.5,5.5 Q11,4 9,4 Q5,4 5,9 Q5,14 9,14 Q11,14 12.5,12.5" fill="none" stroke="#fff" stroke-width="2.3"/><circle cx="14.5" cy="14.5" r="3" fill="#fff" stroke="#444" stroke-width="1.2"/></svg>
<svg style="left:294px;top:222px" width="18" height="18" viewBox="0 0 18 18"><circle cx="8.8" cy="8.5" r="7.6" fill="none" stroke="#333" stroke-width="1.4"/><circle cx="8.8" cy="8.5" r="3.3" fill="#333"/></svg>
<svg style="left:48.5px;top:253px" width="13" height="15" viewBox="0 0 13 15"><path d="M1.5,1 L11,7.5 L1.5,14 Z" fill="url(#trir)" stroke="#1a1a1a" stroke-width="1.35" stroke-linejoin="round"/></svg>
<div class="a" style="left:72.5px;top:247.4px;width:167.1px;height:25px;background:#f0f0f0;box-shadow:0 0 0 1.5px rgba(235,235,230,0.22)"></div>
<svg style="left:76.0px;top:250px" width="20" height="20" viewBox="0 0 20 20"><g transform="translate(10,10)"><circle r="6.3" fill="#999"/><rect x="-1.9" y="-10" width="3.8" height="5" fill="#999" transform="rotate(0)"/><rect x="-1.9" y="-10" width="3.8" height="5" fill="#999" transform="rotate(45)"/><rect x="-1.9" y="-10" width="3.8" height="5" fill="#999" transform="rotate(90)"/><rect x="-1.9" y="-10" width="3.8" height="5" fill="#999" transform="rotate(135)"/><rect x="-1.9" y="-10" width="3.8" height="5" fill="#999" transform="rotate(180)"/><rect x="-1.9" y="-10" width="3.8" height="5" fill="#999" transform="rotate(225)"/><rect x="-1.9" y="-10" width="3.8" height="5" fill="#999" transform="rotate(270)"/><rect x="-1.9" y="-10" width="3.8" height="5" fill="#999" transform="rotate(315)"/><circle r="3" fill="#f0f0f0"/></g></svg>
<div class="t" style="left:113.90px;top:252.88px;font-size:14.13px;color:#333;transform:scaleX(0.9355);transform-origin:0 0;">Document Settings</div>
<svg style="left:48.5px;top:283px" width="13" height="15" viewBox="0 0 13 15"><path d="M1.5,1 L11,7.5 L1.5,14 Z" fill="url(#trir)" stroke="#1a1a1a" stroke-width="1.35" stroke-linejoin="round"/></svg>
<div class="a" style="left:72.5px;top:277.4px;width:137.0px;height:25px;background:#f0f0f0;box-shadow:0 0 0 1.5px rgba(235,235,230,0.22)"></div>
<svg style="left:76.0px;top:281.9px" width="21" height="17" viewBox="0 0 21 17"><rect x="0" y="0" width="9" height="2.5" rx="0.8" fill="#999"/><path d="M0,4 L9.5,4 L11.5,2 L19.7,2 L19.7,15.7 L0,15.7 Z" fill="#999"/></svg>
<div class="t" style="left:113.90px;top:282.88px;font-size:14.13px;color:#333;transform:scaleX(0.9712);transform-origin:0 0;">Named Views</div>
<svg style="left:48.5px;top:313px" width="13" height="15" viewBox="0 0 13 15"><path d="M1.5,1 L11,7.5 L1.5,14 Z" fill="url(#trir)" stroke="#1a1a1a" stroke-width="1.35" stroke-linejoin="round"/></svg>
<div class="a" style="left:72.5px;top:307.4px;width:118.5px;height:25px;background:#f0f0f0;box-shadow:0 0 0 1.5px rgba(235,235,230,0.22)"></div>
<svg style="left:76.2px;top:313.8px" width="20" height="12" viewBox="0 0 20 12"><path d="M0.8,6 C4.5,-1 15.5,-1 19.2,6 C15.5,13 4.5,13 0.8,6 Z" fill="none" stroke="#aaa" stroke-width="1.3"/><circle cx="10" cy="6" r="3.2" fill="none" stroke="#aaa" stroke-width="1.2"/><path d="M4,-1 L16,13" stroke="#888" stroke-width="1.1"/></svg>
<svg style="left:107.2px;top:311.9px" width="21" height="17" viewBox="0 0 21 17"><rect x="0" y="0" width="9" height="2.5" rx="0.8" fill="#999"/><path d="M0,4 L9.5,4 L11.5,2 L19.7,2 L19.7,15.7 L0,15.7 Z" fill="#999"/></svg>
<div class="t" style="left:145.40px;top:312.88px;font-size:14.13px;color:#333;transform:scaleX(0.9012);transform-origin:0 0;">Origin</div>
<svg style="left:49px;top:343px" width="14" height="15" viewBox="0 0 14 15"><path d="M12,1 L12,13.5 L1,13.5 Z" fill="url(#trig)" stroke="#222" stroke-width="1.6" stroke-linejoin="round"/></svg>
<div class="a" style="left:72.5px;top:337.4px;width:128.5px;height:25px;background:#f0f0f0;box-shadow:0 0 0 1.5px rgba(235,235,230,0.22)"></div>
<svg style="left:76.2px;top:343.8px" width="20" height="12" viewBox="0 0 20 12"><path d="M0,6 C4,-2 16,-2 20,6 C16,14 4,14 0,6 Z" fill="#999"/><circle cx="10" cy="6" r="3.4" fill="none" stroke="#eee" stroke-width="1.3"/></svg>
<svg style="left:107.2px;top:341.9px" width="21" height="17" viewBox="0 0 21 17"><rect x="0" y="0" width="9" height="2.5" rx="0.8" fill="#999"/><path d="M0,4 L9.5,4 L11.5,2 L19.7,2 L19.7,15.7 L0,15.7 Z" fill="#999"/></svg>
<div class="t" style="left:145.40px;top:342.88px;font-size:14.13px;color:#333;transform:scaleX(0.9297);transform-origin:0 0;">Bodies</div>
<div class="a" style="left:95px;top:367.4px;width:148.5px;height:25px;background:#f0f0f0;box-shadow:0 0 0 1.5px rgba(235,235,230,0.22)"></div>
<svg style="left:98.7px;top:373.8px" width="20" height="12" viewBox="0 0 20 12"><path d="M0,6 C4,-2 16,-2 20,6 C16,14 4,14 0,6 Z" fill="#999"/><circle cx="10" cy="6" r="3.4" fill="none" stroke="#eee" stroke-width="1.3"/></svg>
<svg style="left:129.7px;top:369.5px" width="20" height="21" viewBox="0 0 20 21"><path d="M1.5,4 Q1.5,1 10,1 Q18.5,1 18.5,4 L18.5,17 Q18.5,20 10,20 Q1.5,20 1.5,17 Z" fill="url(#bodyg)" stroke="#555" stroke-width="1.3"/><path d="M2,4.5 Q10,7 18,4.5" fill="none" stroke="#777" stroke-width="0.8"/></svg>
<div class="t" style="left:167.90px;top:372.88px;font-size:14.13px;color:#333;transform:scaleX(0.9266);transform-origin:0 0;">Fuse Solid</div>
<div class="a" style="left:95px;top:397.4px;width:173.5px;height:25px;background:#f0f0f0;box-shadow:0 0 0 1.5px rgba(235,235,230,0.22)"></div>
<svg style="left:98.7px;top:403.8px" width="20" height="12" viewBox="0 0 20 12"><path d="M0.8,6 C4.5,-1 15.5,-1 19.2,6 C15.5,13 4.5,13 0.8,6 Z" fill="none" stroke="#aaa" stroke-width="1.3"/><circle cx="10" cy="6" r="3.2" fill="none" stroke="#aaa" stroke-width="1.2"/><path d="M4,-1 L16,13" stroke="#888" stroke-width="1.1"/></svg>
<svg style="left:129.7px;top:399.5px" width="20" height="21" viewBox="0 0 20 21"><path d="M1.5,4 Q1.5,1 10,1 Q18.5,1 18.5,4 L18.5,17 Q18.5,20 10,20 Q1.5,20 1.5,17 Z" fill="url(#bodyg)" stroke="#555" stroke-width="1.3"/><path d="M2,4.5 Q10,7 18,4.5" fill="none" stroke="#777" stroke-width="0.8"/></svg>
<div class="t" style="left:167.90px;top:402.88px;font-size:14.13px;color:#333;transform:scaleX(0.9422);transform-origin:0 0;">Left Wing Solid</div>
<div class="a" style="left:95px;top:427.4px;width:184px;height:25px;background:#f0f0f0;box-shadow:0 0 0 1.5px rgba(235,235,230,0.22)"></div>
<svg style="left:98.7px;top:433.8px" width="20" height="12" viewBox="0 0 20 12"><path d="M0.8,6 C4.5,-1 15.5,-1 19.2,6 C15.5,13 4.5,13 0.8,6 Z" fill="none" stroke="#aaa" stroke-width="1.3"/><circle cx="10" cy="6" r="3.2" fill="none" stroke="#aaa" stroke-width="1.2"/><path d="M4,-1 L16,13" stroke="#888" stroke-width="1.1"/></svg>
<svg style="left:129.7px;top:429.5px" width="20" height="21" viewBox="0 0 20 21"><path d="M1.5,4 Q1.5,1 10,1 Q18.5,1 18.5,4 L18.5,17 Q18.5,20 10,20 Q1.5,20 1.5,17 Z" fill="url(#bodyg)" stroke="#555" stroke-width="1.3"/><path d="M2,4.5 Q10,7 18,4.5" fill="none" stroke="#777" stroke-width="0.8"/></svg>
<div class="t" style="left:167.90px;top:432.88px;font-size:14.13px;color:#333;transform:scaleX(0.9193);transform-origin:0 0;">Right Wing Solid</div>
<div class="a" style="left:95px;top:457.4px;width:133.7px;height:25px;background:#f0f0f0;box-shadow:0 0 0 1.5px rgba(235,235,230,0.22)"></div>
<svg style="left:98.7px;top:463.8px" width="20" height="12" viewBox="0 0 20 12"><path d="M0.8,6 C4.5,-1 15.5,-1 19.2,6 C15.5,13 4.5,13 0.8,6 Z" fill="none" stroke="#aaa" stroke-width="1.3"/><circle cx="10" cy="6" r="3.2" fill="none" stroke="#aaa" stroke-width="1.2"/><path d="M4,-1 L16,13" stroke="#888" stroke-width="1.1"/></svg>
<svg style="left:129.7px;top:459.5px" width="20" height="21" viewBox="0 0 20 21"><path d="M1.5,4 Q1.5,1 10,1 Q18.5,1 18.5,4 L18.5,17 Q18.5,20 10,20 Q1.5,20 1.5,17 Z" fill="url(#bodyg)" stroke="#555" stroke-width="1.3"/><path d="M2,4.5 Q10,7 18,4.5" fill="none" stroke="#777" stroke-width="0.8"/></svg>
<div class="t" style="left:167.90px;top:462.88px;font-size:14.13px;color:#333;transform:scaleX(0.9709);transform-origin:0 0;">Vertical</div>
<div class="a" style="left:95px;top:487.4px;width:128.4px;height:25px;background:#f0f0f0;box-shadow:0 0 0 1.5px rgba(235,235,230,0.22)"></div>
<svg style="left:98.7px;top:493.8px" width="20" height="12" viewBox="0 0 20 12"><path d="M0.8,6 C4.5,-1 15.5,-1 19.2,6 C15.5,13 4.5,13 0.8,6 Z" fill="none" stroke="#aaa" stroke-width="1.3"/><circle cx="10" cy="6" r="3.2" fill="none" stroke="#aaa" stroke-width="1.2"/><path d="M4,-1 L16,13" stroke="#888" stroke-width="1.1"/></svg>
<svg style="left:129.7px;top:489.5px" width="20" height="21" viewBox="0 0 20 21"><path d="M1.5,4 Q1.5,1 10,1 Q18.5,1 18.5,4 L18.5,17 Q18.5,20 10,20 Q1.5,20 1.5,17 Z" fill="url(#bodyg)" stroke="#555" stroke-width="1.3"/><path d="M2,4.5 Q10,7 18,4.5" fill="none" stroke="#777" stroke-width="0.8"/></svg>
<div class="t" style="left:167.90px;top:492.88px;font-size:14.13px;color:#333;transform:scaleX(0.9342);transform-origin:0 0;">Rudder</div>
<div class="a" style="left:95px;top:517.4px;width:128.4px;height:25px;background:#f0f0f0;box-shadow:0 0 0 1.5px rgba(235,235,230,0.22)"></div>
<svg style="left:98.7px;top:523.8px" width="20" height="12" viewBox="0 0 20 12"><path d="M0,6 C4,-2 16,-2 20,6 C16,14 4,14 0,6 Z" fill="#999"/><circle cx="10" cy="6" r="3.4" fill="none" stroke="#eee" stroke-width="1.3"/></svg>
<svg style="left:129.7px;top:519.5px" width="20" height="21" viewBox="0 0 20 21"><path d="M1.5,4 Q1.5,1 10,1 Q18.5,1 18.5,4 L18.5,17 Q18.5,20 10,20 Q1.5,20 1.5,17 Z" fill="url(#bodyg)" stroke="#555" stroke-width="1.3"/><path d="M2,4.5 Q10,7 18,4.5" fill="none" stroke="#777" stroke-width="0.8"/></svg>
<div class="t" style="left:167.90px;top:522.88px;font-size:14.13px;color:#333;transform:scaleX(0.9332);transform-origin:0 0;">H- Stab</div>
<svg style="left:48.5px;top:553px" width="13" height="15" viewBox="0 0 13 15"><path d="M1.5,1 L11,7.5 L1.5,14 Z" fill="url(#trir)" stroke="#1a1a1a" stroke-width="1.35" stroke-linejoin="round"/></svg>
<div class="a" style="left:72.5px;top:547.4px;width:148.5px;height:25px;background:#f0f0f0;box-shadow:0 0 0 1.5px rgba(235,235,230,0.22)"></div>
<svg style="left:76.2px;top:553.8px" width="20" height="12" viewBox="0 0 20 12"><path d="M0.8,6 C4.5,-1 15.5,-1 19.2,6 C15.5,13 4.5,13 0.8,6 Z" fill="none" stroke="#aaa" stroke-width="1.3"/><circle cx="10" cy="6" r="3.2" fill="none" stroke="#aaa" stroke-width="1.2"/><path d="M4,-1 L16,13" stroke="#888" stroke-width="1.1"/></svg>
<svg style="left:107.2px;top:551.9px" width="21" height="17" viewBox="0 0 21 17"><rect x="0" y="0" width="9" height="2.5" rx="0.8" fill="#999"/><path d="M0,4 L9.5,4 L11.5,2 L19.7,2 L19.7,15.7 L0,15.7 Z" fill="#999"/></svg>
<div class="t" style="left:145.40px;top:552.88px;font-size:14.13px;color:#333;transform:scaleX(0.9637);transform-origin:0 0;">Canvases</div>
<svg style="left:49px;top:583px" width="14" height="15" viewBox="0 0 14 15"><path d="M12,1 L12,13.5 L1,13.5 Z" fill="url(#trig)" stroke="#222" stroke-width="1.6" stroke-linejoin="round"/></svg>
<div class="a" style="left:72.5px;top:577.4px;width:143.5px;height:25px;background:#f0f0f0;box-shadow:0 0 0 1.5px rgba(235,235,230,0.22)"></div>
<svg style="left:76.2px;top:583.8px" width="20" height="12" viewBox="0 0 20 12"><path d="M0,6 C4,-2 16,-2 20,6 C16,14 4,14 0,6 Z" fill="#999"/><circle cx="10" cy="6" r="3.4" fill="none" stroke="#eee" stroke-width="1.3"/></svg>
<svg style="left:107.2px;top:581.9px" width="21" height="17" viewBox="0 0 21 17"><rect x="0" y="0" width="9" height="2.5" rx="0.8" fill="#999"/><path d="M0,4 L9.5,4 L11.5,2 L19.7,2 L19.7,15.7 L0,15.7 Z" fill="#999"/></svg>
<div class="t" style="left:145.40px;top:582.88px;font-size:14.13px;color:#333;transform:scaleX(0.9574);transform-origin:0 0;">Sketches</div>
<svg style="left:103px;top:595.6px" width="112" height="5" viewBox="0 0 112 5"><path d="M3.0,0.2 L5.6,0.2 L2.6,4.8 L0.0,4.8 Z" fill="#7893bd"/><path d="M10.45,0.2 L13.05,0.2 L10.05,4.8 L7.45,4.8 Z" fill="#7893bd"/><path d="M17.9,0.2 L20.5,0.2 L17.5,4.8 L14.9,4.8 Z" fill="#7893bd"/><path d="M25.35,0.2 L27.950000000000003,0.2 L24.950000000000003,4.8 L22.35,4.8 Z" fill="#7893bd"/><path d="M32.8,0.2 L35.4,0.2 L32.4,4.8 L29.8,4.8 Z" fill="#7893bd"/><path d="M40.25,0.2 L42.85,0.2 L39.85,4.8 L37.25,4.8 Z" fill="#7893bd"/><path d="M47.7,0.2 L50.300000000000004,0.2 L47.300000000000004,4.8 L44.7,4.8 Z" fill="#7893bd"/><path d="M55.15,0.2 L57.75,0.2 L54.75,4.8 L52.15,4.8 Z" fill="#7893bd"/><path d="M62.6,0.2 L65.2,0.2 L62.2,4.8 L59.6,4.8 Z" fill="#7893bd"/><path d="M70.05,0.2 L72.64999999999999,0.2 L69.64999999999999,4.8 L67.05,4.8 Z" fill="#7893bd"/><path d="M77.5,0.2 L80.1,0.2 L77.1,4.8 L74.5,4.8 Z" fill="#7893bd"/><path d="M84.95,0.2 L87.55,0.2 L84.55,4.8 L81.95,4.8 Z" fill="#7893bd"/><path d="M92.4,0.2 L95.0,0.2 L92.0,4.8 L89.4,4.8 Z" fill="#7893bd"/><path d="M99.85000000000001,0.2 L102.45,0.2 L99.45,4.8 L96.85000000000001,4.8 Z" fill="#7893bd"/><path d="M107.3,0.2 L109.89999999999999,0.2 L106.89999999999999,4.8 L104.3,4.8 Z" fill="#7893bd"/></svg>
<div class="a" style="left:95px;top:607.4px;width:218.7px;height:25px;background:#f0f0f0;box-shadow:0 0 0 1.5px rgba(235,235,230,0.22)"></div>
<svg style="left:98.7px;top:613.8px" width="20" height="12" viewBox="0 0 20 12"><path d="M0.8,6 C4.5,-1 15.5,-1 19.2,6 C15.5,13 4.5,13 0.8,6 Z" fill="none" stroke="#aaa" stroke-width="1.3"/><circle cx="10" cy="6" r="3.2" fill="none" stroke="#aaa" stroke-width="1.2"/><path d="M4,-1 L16,13" stroke="#888" stroke-width="1.1"/></svg>
<svg style="left:129.7px;top:609.5px" width="21" height="23" viewBox="0 0 21 23"><path d="M3,2 H16 M2,3 V18 M3,19.5 H12 M17,3 V11" fill="none" stroke="#666" stroke-width="1.1" stroke-dasharray="3,1.5"/><rect x="0.5" y="0.5" width="3" height="3" fill="#1e88e5"/><rect x="15.5" y="0.5" width="3" height="3" fill="#1e88e5"/><rect x="0.5" y="17.5" width="3" height="3" fill="#1e88e5"/><path d="M12,20 L18,12.5 L20,14.5 L14,22 Z" fill="#f5b83d"/><circle cx="19" cy="13" r="1.8" fill="#e53935"/></svg>
<div class="t" style="left:167.90px;top:612.88px;font-size:14.13px;color:#333;transform:scaleX(0.9301);transform-origin:0 0;">Fuse Solid Side Profile</div>
<div class="a" style="left:95px;top:637.4px;width:213.60000000000002px;height:25px;background:#f0f0f0;box-shadow:0 0 0 1.5px rgba(235,235,230,0.22)"></div>
<svg style="left:98.7px;top:643.8px" width="20" height="12" viewBox="0 0 20 12"><path d="M0.8,6 C4.5,-1 15.5,-1 19.2,6 C15.5,13 4.5,13 0.8,6 Z" fill="none" stroke="#aaa" stroke-width="1.3"/><circle cx="10" cy="6" r="3.2" fill="none" stroke="#aaa" stroke-width="1.2"/><path d="M4,-1 L16,13" stroke="#888" stroke-width="1.1"/></svg>
<svg style="left:129.7px;top:639.5px" width="21" height="23" viewBox="0 0 21 23"><path d="M3,2 H16 M2,3 V18 M3,19.5 H12 M17,3 V11" fill="none" stroke="#666" stroke-width="1.1" stroke-dasharray="3,1.5"/><rect x="0.5" y="0.5" width="3" height="3" fill="#1e88e5"/><rect x="15.5" y="0.5" width="3" height="3" fill="#1e88e5"/><rect x="0.5" y="17.5" width="3" height="3" fill="#1e88e5"/><path d="M12,20 L18,12.5 L20,14.5 L14,22 Z" fill="#f5b83d"/><circle cx="19" cy="13" r="1.8" fill="#e53935"/></svg>
<div class="t" style="left:167.90px;top:642.88px;font-size:14.13px;color:#333;transform:scaleX(0.9365);transform-origin:0 0;">Fuse Solid Top Profile</div>
<div class="a" style="left:95px;top:667.4px;width:158.5px;height:25px;background:#f0f0f0;box-shadow:0 0 0 1.5px rgba(235,235,230,0.22)"></div>
<svg style="left:98.7px;top:673.8px" width="20" height="12" viewBox="0 0 20 12"><path d="M0.8,6 C4.5,-1 15.5,-1 19.2,6 C15.5,13 4.5,13 0.8,6 Z" fill="none" stroke="#aaa" stroke-width="1.3"/><circle cx="10" cy="6" r="3.2" fill="none" stroke="#aaa" stroke-width="1.2"/><path d="M4,-1 L16,13" stroke="#888" stroke-width="1.1"/></svg>
<svg style="left:129.7px;top:669.5px" width="21" height="23" viewBox="0 0 21 23"><path d="M3,2 H16 M2,3 V18 M3,19.5 H12 M17,3 V11" fill="none" stroke="#666" stroke-width="1.1" stroke-dasharray="3,1.5"/><rect x="0.5" y="0.5" width="3" height="3" fill="#1e88e5"/><rect x="15.5" y="0.5" width="3" height="3" fill="#1e88e5"/><rect x="0.5" y="17.5" width="3" height="3" fill="#1e88e5"/><path d="M12,20 L18,12.5 L20,14.5 L14,22 Z" fill="#f5b83d"/><circle cx="19" cy="13" r="1.8" fill="#e53935"/></svg>
<div class="t" style="left:167.90px;top:672.88px;font-size:14.13px;color:#333;transform:scaleX(0.9270);transform-origin:0 0;">Wing Profile</div>
<div class="a" style="left:95px;top:697.4px;width:223.75px;height:25px;background:#f0f0f0;box-shadow:0 0 0 1.5px rgba(235,235,230,0.22)"></div>
<svg style="left:98.7px;top:703.8px" width="20" height="12" viewBox="0 0 20 12"><path d="M0.8,6 C4.5,-1 15.5,-1 19.2,6 C15.5,13 4.5,13 0.8,6 Z" fill="none" stroke="#aaa" stroke-width="1.3"/><circle cx="10" cy="6" r="3.2" fill="none" stroke="#aaa" stroke-width="1.2"/><path d="M4,-1 L16,13" stroke="#888" stroke-width="1.1"/></svg>
<svg style="left:129.7px;top:699.5px" width="21" height="23" viewBox="0 0 21 23"><path d="M3,2 H16 M2,3 V18 M3,19.5 H12 M17,3 V11" fill="none" stroke="#666" stroke-width="1.1" stroke-dasharray="3,1.5"/><rect x="0.5" y="0.5" width="3" height="3" fill="#1e88e5"/><rect x="15.5" y="0.5" width="3" height="3" fill="#1e88e5"/><rect x="0.5" y="17.5" width="3" height="3" fill="#1e88e5"/><path d="M12,20 L18,12.5 L20,14.5 L14,22 Z" fill="#f5b83d"/><circle cx="19" cy="13" r="1.8" fill="#e53935"/></svg>
<div class="t" style="left:167.90px;top:702.88px;font-size:14.13px;color:#333;transform:scaleX(0.9498);transform-origin:0 0;">Vertical/ Rudder Profile</div>
<div class="a" style="left:95px;top:727.4px;width:263.8px;height:25px;background:#f0f0f0;box-shadow:0 0 0 1.5px rgba(235,235,230,0.22)"></div>
<div class="a" style="left:126px;top:727.3px;width:232.8px;height:25px;background:#0696d7;"></div>
<svg style="left:98.7px;top:733.8px" width="20" height="12" viewBox="0 0 20 12"><path d="M0,6 C4,-2 16,-2 20,6 C16,14 4,14 0,6 Z" fill="#999"/><circle cx="10" cy="6" r="3.4" fill="none" stroke="#eee" stroke-width="1.3"/></svg>
<svg style="left:129.7px;top:729.5px" width="21" height="23" viewBox="0 0 21 23"><path d="M3,2 H16 M2,3 V18 M3,19.5 H12 M17,3 V11" fill="none" stroke="#666" stroke-width="1.1" stroke-dasharray="3,1.5"/><rect x="0.5" y="0.5" width="3" height="3" fill="#1e88e5"/><rect x="15.5" y="0.5" width="3" height="3" fill="#1e88e5"/><rect x="0.5" y="17.5" width="3" height="3" fill="#1e88e5"/><path d="M12,20 L18,12.5 L20,14.5 L14,22 Z" fill="#f5b83d"/><circle cx="19" cy="13" r="1.8" fill="#e53935"/></svg>
<div class="t" style="left:167.90px;top:732.88px;font-size:14.13px;color:#fff;font-weight:700;transform:scaleX(0.9934);transform-origin:0 0;">Horizontal/ Elevator Profile</div>
<svg style="left:128px;top:744.7px" width="230" height="6" viewBox="0 0 230 6"><path d="M3.0,0.3 L5.6,0.3 L2.6,5.7 L0.0,5.7 Z" fill="#9ab5d4" opacity="0.8"/><path d="M10.45,0.3 L13.05,0.3 L10.05,5.7 L7.45,5.7 Z" fill="#9ab5d4" opacity="0.8"/><path d="M17.9,0.3 L20.5,0.3 L17.5,5.7 L14.9,5.7 Z" fill="#9ab5d4" opacity="0.8"/><path d="M25.35,0.3 L27.950000000000003,0.3 L24.950000000000003,5.7 L22.35,5.7 Z" fill="#9ab5d4" opacity="0.8"/><path d="M32.8,0.3 L35.4,0.3 L32.4,5.7 L29.8,5.7 Z" fill="#9ab5d4" opacity="0.8"/><path d="M40.25,0.3 L42.85,0.3 L39.85,5.7 L37.25,5.7 Z" fill="#9ab5d4" opacity="0.8"/><path d="M47.7,0.3 L50.300000000000004,0.3 L47.300000000000004,5.7 L44.7,5.7 Z" fill="#9ab5d4" opacity="0.8"/><path d="M55.15,0.3 L57.75,0.3 L54.75,5.7 L52.15,5.7 Z" fill="#9ab5d4" opacity="0.8"/><path d="M62.6,0.3 L65.2,0.3 L62.2,5.7 L59.6,5.7 Z" fill="#9ab5d4" opacity="0.8"/><path d="M70.05,0.3 L72.64999999999999,0.3 L69.64999999999999,5.7 L67.05,5.7 Z" fill="#9ab5d4" opacity="0.8"/><path d="M77.5,0.3 L80.1,0.3 L77.1,5.7 L74.5,5.7 Z" fill="#9ab5d4" opacity="0.8"/><path d="M84.95,0.3 L87.55,0.3 L84.55,5.7 L81.95,5.7 Z" fill="#9ab5d4" opacity="0.8"/><path d="M92.4,0.3 L95.0,0.3 L92.0,5.7 L89.4,5.7 Z" fill="#9ab5d4" opacity="0.8"/><path d="M99.85000000000001,0.3 L102.45,0.3 L99.45,5.7 L96.85000000000001,5.7 Z" fill="#9ab5d4" opacity="0.8"/><path d="M107.3,0.3 L109.89999999999999,0.3 L106.89999999999999,5.7 L104.3,5.7 Z" fill="#9ab5d4" opacity="0.8"/><path d="M114.75,0.3 L117.35,0.3 L114.35,5.7 L111.75,5.7 Z" fill="#9ab5d4" opacity="0.8"/><path d="M122.2,0.3 L124.8,0.3 L121.8,5.7 L119.2,5.7 Z" fill="#9ab5d4" opacity="0.8"/><path d="M129.65,0.3 L132.25,0.3 L129.25,5.7 L126.65,5.7 Z" fill="#9ab5d4" opacity="0.8"/><path d="M137.1,0.3 L139.7,0.3 L136.7,5.7 L134.1,5.7 Z" fill="#9ab5d4" opacity="0.8"/><path d="M144.55,0.3 L147.15,0.3 L144.15,5.7 L141.55,5.7 Z" fill="#9ab5d4" opacity="0.8"/><path d="M152.0,0.3 L154.6,0.3 L151.6,5.7 L149.0,5.7 Z" fill="#9ab5d4" opacity="0.8"/><path d="M159.45000000000002,0.3 L162.05,0.3 L159.05,5.7 L156.45000000000002,5.7 Z" fill="#9ab5d4" opacity="0.8"/><path d="M166.9,0.3 L169.5,0.3 L166.5,5.7 L163.9,5.7 Z" fill="#9ab5d4" opacity="0.8"/><path d="M174.35,0.3 L176.95,0.3 L173.95,5.7 L171.35,5.7 Z" fill="#9ab5d4" opacity="0.8"/><path d="M181.8,0.3 L184.4,0.3 L181.4,5.7 L178.8,5.7 Z" fill="#9ab5d4" opacity="0.8"/><path d="M189.25,0.3 L191.85,0.3 L188.85,5.7 L186.25,5.7 Z" fill="#9ab5d4" opacity="0.8"/><path d="M196.70000000000002,0.3 L199.3,0.3 L196.3,5.7 L193.70000000000002,5.7 Z" fill="#9ab5d4" opacity="0.8"/><path d="M204.15,0.3 L206.75,0.3 L203.75,5.7 L201.15,5.7 Z" fill="#9ab5d4" opacity="0.8"/><path d="M211.6,0.3 L214.2,0.3 L211.2,5.7 L208.6,5.7 Z" fill="#9ab5d4" opacity="0.8"/><path d="M219.05,0.3 L221.65,0.3 L218.65,5.7 L216.05,5.7 Z" fill="#9ab5d4" opacity="0.8"/></svg>
<div class="a" style="left:5px;top:931px;width:375px;height:31px;background:#f1f1f1;border:1px solid #c6c6c6;border-top-color:#e8e8e8"></div>
<div class="t" style="left:36.70px;top:939.22px;font-size:13.77px;color:#555;transform:scaleX(0.8783);transform-origin:0 0;">COMMENTS</div>
<svg style="left:353px;top:940px" width="13" height="13" viewBox="0 0 13 13"><circle cx="6.5" cy="6.5" r="6" fill="#222"/><path d="M3,6.5 H10 M6.5,3 V10" stroke="#fff" stroke-width="1.9"/></svg>
<div class="a" style="left:374px;top:940px;width:1px;height:13px;background:#555;"></div>
<div class="a" style="left:376.5px;top:941px;width:1px;height:11px;background:#999;"></div>
<div class="a" style="left:1511px;top:199px;width:313px;height:391px;background:#f0f0f0;border:1px solid #c4c4c4"></div>
<div class="a" style="left:1512px;top:229px;width:311px;height:1px;background:#c8c8c8;"></div>
<svg style="left:1518.5px;top:208.5px" width="12" height="12" viewBox="0 0 12 12"><circle cx="6" cy="6" r="5.7" fill="#222"/><rect x="2.8" y="5.1" width="6.4" height="1.8" fill="#fff"/></svg>
<div class="t" style="left:1541.80px;top:207.69px;font-size:13.62px;color:#555;transform:scaleX(0.8815);transform-origin:0 0;">EXTRUDE</div>
<div class="t" style="left:1527.40px;top:241.14px;font-size:14.93px;color:#333;transform:scaleX(0.8829);transform-origin:0 0;">Type</div>
<div class="t" style="left:1527.40px;top:278.84px;font-size:14.93px;color:#333;transform:scaleX(0.8952);transform-origin:0 0;">Profiles</div>
<div class="t" style="left:1527.40px;top:316.54px;font-size:14.93px;color:#333;transform:scaleX(0.9080);transform-origin:0 0;">Start</div>
<div class="t" style="left:1527.40px;top:353.34px;font-size:14.93px;color:#333;transform:scaleX(0.8768);transform-origin:0 0;">Direction</div>
<div class="t" style="left:1527.40px;top:391.04px;font-size:14.93px;color:#333;transform:scaleX(0.8877);transform-origin:0 0;">Extent Type</div>
<div class="t" style="left:1527.40px;top:428.34px;font-size:14.93px;color:#333;transform:scaleX(0.8955);transform-origin:0 0;">Distance</div>
<div class="t" style="left:1527.40px;top:515.94px;font-size:14.93px;color:#333;transform:scaleX(0.8851);transform-origin:0 0;">Operation</div>
<div class="a" style="left:1617.7px;top:231.8px;width:29.3px;height:33.4px;background:#0696d7;border-radius:2px"></div>
<svg style="left:1620px;top:236px" width="25" height="25" viewBox="0 0 25 25"><path d="M2,7 L6,3 L16,3 L16,19 L12,23 L2,23 Z" fill="#d8d8d8"/><path d="M2,7 L6,3 L16,3 L12,7 Z" fill="#b9dcfb"/><rect x="2" y="7" width="10" height="13" fill="#8ac9f8"/><path d="M12,7 L16,3 L16,16 L12,20 Z" fill="#63aee6"/><path d="M20,20 V5 M18.3,7 L20,3.5 L21.7,7" fill="none" stroke="#fff" stroke-width="1.2"/></svg>
<svg style="left:1658px;top:238.5px" width="23" height="21" viewBox="0 0 23 21"><path d="M1,6 L5,2 L14,2 L14,15 L10,19 Q5,17 1,19 Z" fill="#4a9ee0"/><path d="M5,6 Q7,5 10,6 L10,19 Q7,17 5,18 Z" fill="#7cc0f5"/><path d="M1,19 Q5,17 10,19 L14,15" fill="none" stroke="#aaa" stroke-width="1.5"/><path d="M19,18 V3 M17.3,5 L19,1.5 L20.7,5" fill="none" stroke="#222" stroke-width="1.3"/></svg>
<div class="a" style="left:1617.7px;top:269.5px;width:97.7px;height:33.4px;background:#0696d7;border-radius:2px"></div>
<svg style="left:1626px;top:276px" width="12" height="17" viewBox="0 0 12 17"><path d="M1,1 L1,14 L4.5,11 L7,16 L9,15 L6.7,10.2 L11,10 Z" fill="#ddd" stroke="#555" stroke-width="0.9" stroke-linejoin="round"/></svg>
<div class="t" style="left:1645.50px;top:278.84px;font-size:14.93px;color:#fff;transform:scaleX(0.9138);transform-origin:0 0;">1 selected</div>
<svg style="left:1729.5px;top:281.5px" width="11" height="11" viewBox="0 0 11 11"><path d="M1,1 L10,10 M10,1 L1,10" stroke="#444" stroke-width="1.9"/></svg>
<div class="a" style="left:1618px;top:307.2px;width:165px;height:33.4px;background:#fff;border:1px solid #d2d2d2;border-radius:2px"></div>
<svg style="left:1625px;top:314px" width="15" height="20" viewBox="0 0 15 20"><path d="M2,1 V19" stroke="#1e2a4a" stroke-width="1.8"/><path d="M3,9.5 H12 M9,6.5 L12.5,9.5 L9,12.5" fill="none" stroke="#222" stroke-width="1.2"/></svg>
<div class="t" style="left:1648.00px;top:316.54px;font-size:14.93px;color:#333;transform:scaleX(0.8601);transform-origin:0 0;">Profile Plane</div>
<svg style="left:1768.8px;top:321.5px" width="7.7" height="5" viewBox="0 0 7.7 5"><path d="M0,0 L7.7,0 L3.85,5 Z" fill="#333"/></svg>
<div class="a" style="left:1618px;top:344.8px;width:165px;height:33.4px;background:#fff;border:1px solid #d2d2d2;border-radius:2px"></div>
<svg style="left:1621px;top:351px" width="22" height="22" viewBox="0 0 22 22"><path d="M4,1 L17,5 L14,9 L17,13 L7,12 Z" fill="#f0a877" stroke="#c88050" stroke-width="0.6"/><path d="M2,20 L10,11" stroke="#333" stroke-width="1.2"/><path d="M1.5,20.5 L2,16 M1.5,20.5 L6,20" stroke="#333" stroke-width="1.2"/></svg>
<div class="t" style="left:1648.00px;top:353.34px;font-size:14.93px;color:#333;transform:scaleX(0.8675);transform-origin:0 0;">One Side</div>
<svg style="left:1768.8px;top:359px" width="7.7" height="5" viewBox="0 0 7.7 5"><path d="M0,0 L7.7,0 L3.85,5 Z" fill="#333"/></svg>
<div class="a" style="left:1618px;top:382px;width:165px;height:33.3px;background:#0696d7;border-radius:2px"></div>
<svg style="left:1622px;top:388px" width="20" height="22" viewBox="0 0 20 22"><path d="M1.5,1 V21 M17.5,1 V21" stroke="#1e2a4a" stroke-width="1.8"/><path d="M3,11 H16 M6,8 L3,11 L6,14 M13,8 L16,11 L13,14" fill="none" stroke="#fff" stroke-width="1.1"/></svg>
<div class="t" style="left:1648.20px;top:391.04px;font-size:14.93px;color:#fff;transform:scaleX(0.8921);transform-origin:0 0;">Distance</div>
<svg style="left:1768.8px;top:397px" width="7.7" height="5" viewBox="0 0 7.7 5"><path d="M0,0 L7.7,0 L3.85,5 Z" fill="#fff"/></svg>
<div class="a" style="left:1618px;top:420.8px;width:165px;height:31.2px;background:#fff;border:1px solid #d2d2d2;border-radius:2px"></div>
<div class="a" style="left:1618px;top:458px;width:165px;height:31.5px;background:#fff;border:1px solid #d2d2d2;border-radius:2px"></div>
<div class="a" style="left:1619px;top:498.5px;width:187.5px;height:1px;background:#c8c8c8;"></div>
<div class="a" style="left:1618px;top:508.5px;width:165px;height:31.1px;background:#fff;border:1px solid #d2d2d2;border-radius:2px"></div>
<svg style="left:1621px;top:515px" width="24" height="19" viewBox="0 0 24 19"><path d="M1.5,6 Q1.5,3 8,3 Q14.5,3 14.5,6 L14.5,15 Q14.5,18 8,18 Q1.5,18 1.5,15 Z" fill="#d9d9d9" stroke="#666" stroke-width="1"/><path d="M2,6 Q8,9 14,6" fill="none" stroke="#666" stroke-width="0.8"/><path d="M17,0 L18.3,3.5 L22,2.5 L19.5,5.5 L22.5,8 L18.5,8 L17.7,11.5 L16.2,8.3 L12.5,9 L15,6 L12.5,2.5 L16,3.3 Z" fill="#f5a300"/></svg>
<div class="t" style="left:1648.20px;top:515.94px;font-size:14.93px;color:#333;transform:scaleX(0.9255);transform-origin:0 0;">New Body</div>
<svg style="left:1768.8px;top:522px" width="7.7" height="5" viewBox="0 0 7.7 5"><path d="M0,0 L7.7,0 L3.85,5 Z" fill="#333"/></svg>
<div class="a" style="left:1512px;top:544px;width:311px;height:1px;background:#c8c8c8;"></div>
<svg style="left:1522.3px;top:560.4px" width="15" height="15" viewBox="0 0 15 15"><circle cx="7.5" cy="7.5" r="7.3" fill="#111"/><rect x="6.3" y="6.2" width="2.6" height="5.5" fill="#fff"/><circle cx="7.6" cy="4" r="1.4" fill="#fff"/><rect x="5.2" y="10.5" width="4.8" height="1.4" fill="#fff"/></svg>
<div class="a" style="left:1646.2px;top:555.3px;width:74.4px;height:23px;background:#e6e6e6;border:1px solid #c9c9c9"></div>
<div class="t" style="left:1673.00px;top:558.87px;font-size:15.65px;color:#aaa;transform:scaleX(0.9051);transform-origin:0 0;">OK</div>
<div class="a" style="left:1734.2px;top:555.3px;width:74.4px;height:23px;background:#ececec;border:1px solid #b9b9b9"></div>
<div class="t" style="left:1747.00px;top:558.87px;font-size:15.65px;color:#333;transform:scaleX(0.9717);transform-origin:0 0;">Cancel</div>
<div class="a" style="left:1619.5px;top:415.7px;width:124px;height:88.7px;background:#fff;border:1px solid #666;border-radius:3px"></div>
<div class="a" style="left:1625px;top:446.3px;width:112.7px;height:27.5px;background:#d9d9d9;"></div>
<svg style="left:1626px;top:421px" width="20" height="20" viewBox="0 0 20 20"><path d="M1.5,1 V20 M17.5,1 V20" stroke="#1e2a4a" stroke-width="1.8"/><path d="M3,10.5 H16 M6,7.5 L3,10.5 L6,13.5 M13,7.5 L16,10.5 L13,13.5" fill="none" stroke="#222" stroke-width="1.1"/></svg>
<div class="t" style="left:1650.30px;top:425.02px;font-size:15.36px;color:#333;transform:scaleX(0.8685);transform-origin:0 0;">Distance</div>
<svg style="left:1626px;top:448.5px" width="20" height="21" viewBox="0 0 20 21"><path d="M1,9 H8 M5.5,6.5 L8,9 L5.5,11.5" fill="none" stroke="#222" stroke-width="1.1"/><rect x="9" y="4.5" width="2.4" height="9" fill="#e00"/><path d="M11,0.5 V3 M11,15 V20 H19 V0.5" fill="none" stroke="#1e2a4a" stroke-width="1.8"/></svg>
<div class="t" style="left:1650.30px;top:451.89px;font-size:15.22px;color:#333;transform:scaleX(0.8762);transform-origin:0 0;">To Object</div>
<svg style="left:1626px;top:476px" width="20" height="20" viewBox="0 0 20 20"><path d="M4.5,1 V5 M13.5,1 V5 M4.5,13 V19 H13.5 V13" fill="none" stroke="#1e2a4a" stroke-width="1.8"/><path d="M1,9.5 H18 M15,6.5 L18,9.5 L15,12.5" fill="none" stroke="#222" stroke-width="1.1"/></svg>
<div class="t" style="left:1650.30px;top:479.47px;font-size:15.65px;color:#333;transform:scaleX(0.8806);transform-origin:0 0;">All</div>
<div class="a" style="left:1209.2px;top:451px;width:409px;height:50.5px;background:#515151;border-radius:11px"></div>
<div class="t" style="left:1227.50px;top:457.44px;font-size:13.91px;color:#f2f2f2;font-weight:700;transform:scaleX(0.9546);transform-origin:0 0;">To Object</div>
<div class="t" style="left:1227.50px;top:482.64px;font-size:13.91px;color:#f2f2f2;font-weight:700;transform:scaleX(0.9394);transform-origin:0 0;">Extrudes to a body, face, or plane that you select.</div>
<svg style="left:1815px;top:185px" width="100" height="110" viewBox="0 0 100 110"><g transform="translate(-1815 -185)"><defs><linearGradient id="vcg" gradientUnits="userSpaceOnUse" x1="0" y1="220" x2="0" y2="286"><stop offset="0" stop-color="#f1f1f1"/><stop offset="1" stop-color="#d9d9d9"/></linearGradient>
      <radialGradient id="vcs" cx="0.5" cy="0.5" r="0.5"><stop offset="0" stop-color="#888" stop-opacity="0.55"/><stop offset="1" stop-color="#aaa" stop-opacity="0"/></radialGradient></defs>
      <ellipse cx="1860" cy="286" rx="36" ry="8" fill="url(#vcs)"/>
      <path d="M1823.7,218.9 L1851,214.4 L1885.6,218.9 L1886.7,270 L1845,285.5 L1823.7,275 Z" fill="url(#vcg)"/>
      <path d="M1823.7,218.9 L1851,214.4 L1885.6,218.9 L1842.2,228.3 Z" fill="#f3f3f3"/>
      <rect x="1837" y="238" width="15" height="36" fill="#e2e4e8" opacity="0.7"/>
      <path d="M1823.7,218.9 L1842.2,228.3 L1885.6,218.9 L1851,214.4 Z M1842.2,228.3 L1845,285.5 M1885.6,218.9 L1886.7,270 L1845,285.5 L1823.7,275" fill="none" stroke="#777" stroke-width="0.8" stroke-dasharray="3,2.2"/>
      <text x="0" y="0" font-family="Liberation Sans" font-size="12" fill="#8f8f8f" transform="translate(1856 262) rotate(-24) scale(0.85 1)">BACK</text>
      <text x="0" y="0" font-family="Liberation Sans" font-size="10" fill="#9a9a9a" transform="translate(1823 257) rotate(12) scale(0.8 1)">GHT</text>
      <path d="M1851,205 L1851,214.5" stroke="#7070ff" stroke-width="3"/>
      <text x="1845.5" y="205.5" font-family="Liberation Sans" font-size="14" fill="#7d7dff">Z</text>
      <path d="M1886,270.5 L1894.4,273.3" stroke="#80e880" stroke-width="2.5"/>
      <text x="1895" y="281.5" font-family="Liberation Sans" font-size="13.5" fill="#86ee86">Y</text></g></svg>
<div class="a" style="left:811.3px;top:933px;width:295.4px;height:29.5px;background:#f0f0f0;"></div>
<svg style="left:814px;top:937px" width="22" height="21" viewBox="0 0 22 21"><ellipse cx="11" cy="11.5" rx="10" ry="4.5" fill="none" stroke="#555" stroke-width="1.2"/><ellipse cx="10" cy="10.5" rx="4.5" ry="9.5" fill="none" stroke="#555" stroke-width="1.2"/><circle cx="9.5" cy="11" r="2" fill="#1e88e5"/></svg>
<svg style="left:841.7px;top:946px" width="6.6" height="4.5" viewBox="0 0 6.6 4.5"><path d="M0,0 L6.6,0 L3.3,4.5 Z" fill="#333"/></svg>
<svg style="left:856px;top:937px" width="20" height="20" viewBox="0 0 20 20"><rect x="1" y="5" width="18" height="14" fill="#e8e8e8" stroke="#555" stroke-width="1.3"/><rect x="4" y="9.5" width="12" height="5" fill="#8ea3bb" stroke="#555" stroke-width="1"/><path d="M3,5 L7,1 L8,4 L14,1 L15,5" fill="#777"/></svg>
<svg style="left:888px;top:937px" width="21" height="21" viewBox="0 0 21 21"><path d="M6,19 Q2,14 2,11 Q2,9 4,10 L6,12 L6,3 Q6,1.5 7.5,1.5 Q9,1.5 9,3 L9,9 L9,1.5 Q9,0.5 10.5,0.5 Q12,0.5 12,1.5 L12,9 L12,2 Q12,1 13.5,1 Q15,1 15,2.5 L15,9 L15,4 Q15,3 16.5,3 Q18,3 18,4.5 L18,13 Q18,17 15,20 Z" fill="#fff" stroke="#555" stroke-width="1.1"/></svg>
<svg style="left:920px;top:937px" width="21" height="21" viewBox="0 0 21 21"><circle cx="8" cy="11" r="6" fill="#e6f0f4" stroke="#555" stroke-width="1.5"/><path d="M12.5,15.5 L18,20" stroke="#444" stroke-width="3"/><path d="M16,1 V7 M13,4 H19 M13,9 H19" stroke="#555" stroke-width="1"/></svg>
<svg style="left:953px;top:937px" width="21" height="21" viewBox="0 0 21 21"><rect x="0.5" y="0.5" width="18" height="18" fill="none" stroke="#555" stroke-width="1" stroke-dasharray="2,1.5"/><circle cx="9" cy="9" r="7" fill="#e6f0f4" stroke="#555" stroke-width="1.5"/><path d="M14,14 L20,20" stroke="#444" stroke-width="3"/></svg>
<svg style="left:980px;top:946px" width="7" height="4.5" viewBox="0 0 7 4.5"><path d="M0,0 L7,0 L3.5,4.5 Z" fill="#333"/></svg>
<svg style="left:994.7px;top:937px" width="21" height="21" viewBox="0 0 21 21"><rect x="1" y="1" width="19" height="15" rx="1.5" fill="#7ea9d8" stroke="#555" stroke-width="1.4"/><rect x="3.5" y="3.5" width="14" height="10" fill="#a8c8ec"/><path d="M7,20 H14 M10.5,16 V20" stroke="#555" stroke-width="1.5"/></svg>
<svg style="left:1017.5px;top:946px" width="6.5" height="4.5" viewBox="0 0 6.5 4.5"><path d="M0,0 L6.5,0 L3.25,4.5 Z" fill="#333"/></svg>
<svg style="left:1033px;top:937px" width="21" height="21" viewBox="0 0 21 21"><rect x="0.5" y="0.5" width="19" height="19" fill="#777"/><path d="M3.0,0.5 V19.5 M0.5,3.0 H19.5" stroke="#ddd" stroke-width="0.8"/><path d="M5.5,0.5 V19.5 M0.5,5.5 H19.5" stroke="#ddd" stroke-width="0.8"/><path d="M8.0,0.5 V19.5 M0.5,8.0 H19.5" stroke="#ddd" stroke-width="0.8"/><path d="M10.5,0.5 V19.5 M0.5,10.5 H19.5" stroke="#ddd" stroke-width="0.8"/><path d="M13.0,0.5 V19.5 M0.5,13.0 H19.5" stroke="#ddd" stroke-width="0.8"/><path d="M15.5,0.5 V19.5 M0.5,15.5 H19.5" stroke="#ddd" stroke-width="0.8"/><path d="M18.0,0.5 V19.5 M0.5,18.0 H19.5" stroke="#ddd" stroke-width="0.8"/></svg>
<svg style="left:1055.8px;top:946px" width="7" height="4.5" viewBox="0 0 7 4.5"><path d="M0,0 L7,0 L3.5,4.5 Z" fill="#333"/></svg>
<svg style="left:1072px;top:938px" width="20" height="19" viewBox="0 0 20 19"><rect x="0.5" y="0.5" width="18" height="18" rx="1" fill="#6f93c8" stroke="#3d5f96" stroke-width="1"/><path d="M9.5,0 V19 M0,9.5 H19" stroke="#f0f0f0" stroke-width="1.5"/><rect x="2" y="2" width="6" height="6" fill="#a9c3e8"/><rect x="11" y="2" width="6" height="6" fill="#a9c3e8"/><rect x="2" y="11" width="6" height="6" fill="#a9c3e8"/><rect x="11" y="11" width="6" height="6" fill="#a9c3e8"/></svg>
<svg style="left:1095px;top:946px" width="6.7" height="4.5" viewBox="0 0 6.7 4.5"><path d="M0,0 L6.7,0 L3.35,4.5 Z" fill="#333"/></svg>
<div class="t" style="left:1680.00px;top:940.26px;font-size:15.07px;color:#333;font-weight:700;transform:scaleX(0.9267);transform-origin:0 0;">1 Profile | Area : 15582.774 mm^2</div>
<div class="a" style="left:0px;top:967px;width:1920px;height:2px;background:#d8d8d8;"></div>
<div class="a" style="left:0px;top:968.5px;width:1920px;height:61.5px;background:#f0f0f0;"></div>
<svg style="left:12.8px;top:989.3px" width="17" height="19" viewBox="0 0 17 19"><rect x="0" y="0" width="2.6" height="18.5" fill="#444"/><path d="M16.5,0.5 L3.5,9.25 L16.5,18 Z" fill="#444"/></svg>
<svg style="left:43.7px;top:989.5px" width="17" height="18" viewBox="0 0 17 18"><path d="M0.5,9 L11.5,0.5 L11.5,17.5 Z" fill="#444"/><rect x="12.8" y="6.5" width="2.6" height="5" fill="#444"/></svg>
<svg style="left:74.7px;top:989.3px" width="17" height="19" viewBox="0 0 17 19"><path d="M1,0 L15.5,9.3 L1,18.6 Z" fill="#444"/></svg>
<svg style="left:105.7px;top:989.5px" width="17" height="18" viewBox="0 0 17 18"><rect x="0.5" y="6.5" width="2.6" height="5" fill="#444"/><path d="M16,9 L4.5,0.5 L4.5,17.5 Z" fill="#444"/></svg>
<svg style="left:137.8px;top:989.3px" width="17" height="19" viewBox="0 0 17 19"><path d="M0.5,0.5 L13.5,9.25 L0.5,18 Z" fill="#444"/><rect x="14" y="0" width="2.6" height="18.5" fill="#444"/></svg>
<svg style="left:184.4px;top:988.5px" width="20" height="20" viewBox="0 0 20 20"><rect x="0.5" y="0.5" width="17" height="17" fill="#8ac9f8" stroke="#3d8bcf" stroke-width="1"/><path d="M1,17 L1,11 Q5,6 9,11 Q11,13 13,11 Q15,9 17,12 L17,17 Z" fill="#3d8bcf"/><circle cx="12.5" cy="5" r="1.8" fill="#f5e9a0"/></svg>
<svg style="left:214.3px;top:988.5px" width="20" height="20" viewBox="0 0 20 20"><rect x="0.5" y="0.5" width="17" height="17" fill="#8ac9f8" stroke="#3d8bcf" stroke-width="1"/><path d="M1,17 L1,11 Q5,6 9,11 Q11,13 13,11 Q15,9 17,12 L17,17 Z" fill="#3d8bcf"/><circle cx="12.5" cy="5" r="1.8" fill="#f5e9a0"/></svg>
<svg style="left:244.2px;top:988.5px" width="20" height="20" viewBox="0 0 20 20"><path d="M3,2 H15 M2,3 V16 M3,17.5 H11 M16,3 V10" fill="none" stroke="#555" stroke-width="1" stroke-dasharray="2.5,1.5"/><rect x="0.5" y="0.5" width="3" height="3" fill="#1e88e5"/><rect x="14" y="0.5" width="3" height="3" fill="#1e88e5"/><rect x="0.5" y="15.5" width="3" height="3" fill="#1e88e5"/><path d="M10,18 L16,11 L18,13 L12,20 Z" fill="#f5b83d"/><circle cx="17.3" cy="11.5" r="1.6" fill="#e53935"/></svg>
<svg style="left:274.1px;top:988.5px" width="20" height="20" viewBox="0 0 20 20"><path d="M1,6 L5,2 L13,2 L13,15 L9,19 L1,19 Z" fill="#d0d0d0"/><path d="M1,6 L5,2 L13,2 L9,6 Z" fill="#8ac9f8"/><rect x="1" y="6" width="8" height="10" fill="#63aee6"/><path d="M9,6 L13,2 L13,13 L9,16 Z" fill="#3d8bcf"/><path d="M17,16 V3 M15.5,5 L17,1.5 L18.5,5" fill="none" stroke="#333" stroke-width="1.1"/></svg>
<svg style="left:304.0px;top:988.5px" width="20" height="20" viewBox="0 0 20 20"><path d="M3,2 H15 M2,3 V16 M3,17.5 H11 M16,3 V10" fill="none" stroke="#555" stroke-width="1" stroke-dasharray="2.5,1.5"/><rect x="0.5" y="0.5" width="3" height="3" fill="#1e88e5"/><rect x="14" y="0.5" width="3" height="3" fill="#1e88e5"/><rect x="0.5" y="15.5" width="3" height="3" fill="#1e88e5"/><path d="M10,18 L16,11 L18,13 L12,20 Z" fill="#f5b83d"/><circle cx="17.3" cy="11.5" r="1.6" fill="#e53935"/></svg>
<svg style="left:333.9px;top:988.5px" width="20" height="20" viewBox="0 0 20 20"><path d="M1,6 L5,2 L13,2 L13,15 L9,19 L1,19 Z" fill="#d0d0d0"/><path d="M1,6 L5,2 L13,2 L9,6 Z" fill="#8ac9f8"/><rect x="1" y="6" width="8" height="10" fill="#63aee6"/><path d="M9,6 L13,2 L13,13 L9,16 Z" fill="#3d8bcf"/><path d="M17,16 V3 M15.5,5 L17,1.5 L18.5,5" fill="none" stroke="#333" stroke-width="1.1"/></svg>
<svg style="left:363.79999999999995px;top:988.5px" width="20" height="20" viewBox="0 0 20 20"><path d="M8,2 L8,18 L1,18 Z" fill="none" stroke="#555" stroke-width="1.1"/><path d="M10,2 L10,18 L17,18 Z" fill="#5ea9e3"/></svg>
<svg style="left:393.7px;top:988.5px" width="20" height="20" viewBox="0 0 20 20"><path d="M3,2 H15 M2,3 V16 M3,17.5 H11 M16,3 V10" fill="none" stroke="#555" stroke-width="1" stroke-dasharray="2.5,1.5"/><rect x="0.5" y="0.5" width="3" height="3" fill="#1e88e5"/><rect x="14" y="0.5" width="3" height="3" fill="#1e88e5"/><rect x="0.5" y="15.5" width="3" height="3" fill="#1e88e5"/><path d="M10,18 L16,11 L18,13 L12,20 Z" fill="#f5b83d"/><circle cx="17.3" cy="11.5" r="1.6" fill="#e53935"/></svg>
<svg style="left:423.6px;top:988.5px" width="20" height="20" viewBox="0 0 20 20"><path d="M1,6 L5,2 L13,2 L13,15 L9,19 L1,19 Z" fill="#d0d0d0"/><path d="M1,6 L5,2 L13,2 L9,6 Z" fill="#8ac9f8"/><rect x="1" y="6" width="8" height="10" fill="#63aee6"/><path d="M9,6 L13,2 L13,13 L9,16 Z" fill="#3d8bcf"/><path d="M17,16 V3 M15.5,5 L17,1.5 L18.5,5" fill="none" stroke="#333" stroke-width="1.1"/></svg>
<svg style="left:453.5px;top:988.5px" width="20" height="20" viewBox="0 0 20 20"><path d="M1,6 L5,2 L13,2 L13,15 L9,19 L1,19 Z" fill="#d0d0d0"/><path d="M1,6 L5,2 L13,2 L9,6 Z" fill="#8ac9f8"/><rect x="1" y="6" width="8" height="10" fill="#63aee6"/><path d="M9,6 L13,2 L13,13 L9,16 Z" fill="#3d8bcf"/><path d="M17,16 V3 M15.5,5 L17,1.5 L18.5,5" fill="none" stroke="#333" stroke-width="1.1"/></svg>
<svg style="left:483.4px;top:988.5px" width="20" height="20" viewBox="0 0 20 20"><path d="M8,2 L8,18 L1,18 Z" fill="none" stroke="#555" stroke-width="1.1"/><path d="M10,2 L10,18 L17,18 Z" fill="#5ea9e3"/></svg>
<svg style="left:513.3px;top:988.5px" width="20" height="20" viewBox="0 0 20 20"><path d="M3,2 H15 M2,3 V16 M3,17.5 H11 M16,3 V10" fill="none" stroke="#555" stroke-width="1" stroke-dasharray="2.5,1.5"/><rect x="0.5" y="0.5" width="3" height="3" fill="#1e88e5"/><rect x="14" y="0.5" width="3" height="3" fill="#1e88e5"/><rect x="0.5" y="15.5" width="3" height="3" fill="#1e88e5"/><path d="M10,18 L16,11 L18,13 L12,20 Z" fill="#f5b83d"/><circle cx="17.3" cy="11.5" r="1.6" fill="#e53935"/></svg>
<svg style="left:543.1999999999999px;top:988.5px" width="20" height="20" viewBox="0 0 20 20"><path d="M1,6 L5,2 L13,2 L13,15 L9,19 L1,19 Z" fill="#d0d0d0"/><path d="M1,6 L5,2 L13,2 L9,6 Z" fill="#8ac9f8"/><rect x="1" y="6" width="8" height="10" fill="#63aee6"/><path d="M9,6 L13,2 L13,13 L9,16 Z" fill="#3d8bcf"/><path d="M17,16 V3 M15.5,5 L17,1.5 L18.5,5" fill="none" stroke="#333" stroke-width="1.1"/></svg>
<svg style="left:573.1px;top:988.5px" width="20" height="20" viewBox="0 0 20 20"><path d="M1,6 L5,2 L13,2 L13,15 L9,19 L1,19 Z" fill="#d0d0d0"/><path d="M1,6 L5,2 L13,2 L9,6 Z" fill="#8ac9f8"/><rect x="1" y="6" width="8" height="10" fill="#63aee6"/><path d="M9,6 L13,2 L13,13 L9,16 Z" fill="#3d8bcf"/><path d="M17,16 V3 M15.5,5 L17,1.5 L18.5,5" fill="none" stroke="#333" stroke-width="1.1"/></svg>
<div class="a" style="left:597.2px;top:982.7px;width:29.8px;height:29.2px;background:#0696d7;border-radius:3px"></div>
<svg style="left:603.0px;top:988.5px" width="20" height="20" viewBox="0 0 20 20"><path d="M3,2 H15 M2,3 V16 M3,17.5 H11 M16,3 V10" fill="none" stroke="#555" stroke-width="1" stroke-dasharray="2.5,1.5"/><rect x="0.5" y="0.5" width="3" height="3" fill="#1e88e5"/><rect x="14" y="0.5" width="3" height="3" fill="#1e88e5"/><rect x="0.5" y="15.5" width="3" height="3" fill="#1e88e5"/><path d="M10,18 L16,11 L18,13 L12,20 Z" fill="#f5b83d"/><circle cx="17.3" cy="11.5" r="1.6" fill="#e53935"/></svg>
<svg style="left:632.9px;top:988.5px" width="20" height="20" viewBox="0 0 20 20"><path d="M1,6 L5,2 L13,2 L13,15 L9,19 L1,19 Z" fill="#d0d0d0"/><path d="M1,6 L5,2 L13,2 L9,6 Z" fill="#8ac9f8"/><rect x="1" y="6" width="8" height="10" fill="#63aee6"/><path d="M9,6 L13,2 L13,13 L9,16 Z" fill="#3d8bcf"/><path d="M17,16 V3 M15.5,5 L17,1.5 L18.5,5" fill="none" stroke="#333" stroke-width="1.1"/></svg>
<div class="a" style="left:193.2px;top:1017.5px;width:450.3px;height:1.6px;background:#c6c6c6;"></div>
<div class="a" style="left:193.2px;top:1012px;width:1.4px;height:6px;background:#c6c6c6;"></div>
<div class="a" style="left:223.2px;top:1012px;width:1.4px;height:6px;background:#c6c6c6;"></div>
<div class="a" style="left:253.2px;top:1012px;width:1.4px;height:6px;background:#c6c6c6;"></div>
<div class="a" style="left:283.2px;top:1012px;width:1.4px;height:6px;background:#c6c6c6;"></div>
<div class="a" style="left:313.2px;top:1012px;width:1.4px;height:6px;background:#c6c6c6;"></div>
<div class="a" style="left:343.2px;top:1012px;width:1.4px;height:6px;background:#c6c6c6;"></div>
<div class="a" style="left:373.2px;top:1012px;width:1.4px;height:6px;background:#c6c6c6;"></div>
<div class="a" style="left:403.2px;top:1012px;width:1.4px;height:6px;background:#c6c6c6;"></div>
<div class="a" style="left:433.2px;top:1012px;width:1.4px;height:6px;background:#c6c6c6;"></div>
<div class="a" style="left:463.2px;top:1012px;width:1.4px;height:6px;background:#c6c6c6;"></div>
<div class="a" style="left:493.2px;top:1012px;width:1.4px;height:6px;background:#c6c6c6;"></div>
<div class="a" style="left:523.2px;top:1012px;width:1.4px;height:6px;background:#c6c6c6;"></div>
<div class="a" style="left:553.2px;top:1012px;width:1.4px;height:6px;background:#c6c6c6;"></div>
<div class="a" style="left:583.2px;top:1012px;width:1.4px;height:6px;background:#c6c6c6;"></div>
<div class="a" style="left:613.2px;top:1012px;width:1.4px;height:6px;background:#c6c6c6;"></div>
<div class="a" style="left:643.2px;top:1012px;width:1.4px;height:6px;background:#c6c6c6;"></div>
<svg style="left:650px;top:980px" width="16" height="40" viewBox="0 0 16 40"><path d="M0.5,0.5 H15 L13,5 L9,7 V39.5 H6.5 V7 L2.5,5 Z" fill="#555"/></svg>
<svg style="left:1883.4px;top:988.9px" width="20.5" height="20" viewBox="0 0 20.5 20"><g transform="translate(10.25,10)"><circle r="6.8" fill="#999"/><rect x="-2" y="-10" width="4" height="5" fill="#999" transform="rotate(0)"/><rect x="-2" y="-10" width="4" height="5" fill="#999" transform="rotate(45)"/><rect x="-2" y="-10" width="4" height="5" fill="#999" transform="rotate(90)"/><rect x="-2" y="-10" width="4" height="5" fill="#999" transform="rotate(135)"/><rect x="-2" y="-10" width="4" height="5" fill="#999" transform="rotate(180)"/><rect x="-2" y="-10" width="4" height="5" fill="#999" transform="rotate(225)"/><rect x="-2" y="-10" width="4" height="5" fill="#999" transform="rotate(270)"/><rect x="-2" y="-10" width="4" height="5" fill="#999" transform="rotate(315)"/><circle r="3" fill="#f0f0f0"/></g></svg>
<div class="a" style="left:1280px;top:735.3px;width:133px;height:27.6px;background:#f0f0f0;"></div>
<svg style="left:1283px;top:737px" width="12" height="24" viewBox="0 0 12 24"><path d="M3,2 L9,6 L3,10 L9,14 L3,18 L9,22" fill="none" stroke="#cfcfcf" stroke-width="1.2" stroke-dasharray="1.5,1.5"/><path d="M11.5,0 V24" stroke="#d8d8d8" stroke-width="1.5"/></svg>
<div class="a" style="left:1298px;top:737px;width:85.5px;height:24.5px;background:#fff;border:1px solid #c9c9c9"></div>
<div class="a" style="left:1315px;top:740px;width:50px;height:18px;background:#ececec;"></div>
<div class="t" style="left:1315.60px;top:741.87px;font-size:14.06px;color:#222;transform:scaleX(0.9088);transform-origin:0 0;">0.00 mm</div>
<svg style="left:1397px;top:740.5px" width="4" height="4" viewBox="0 0 4 4"><circle cx="2" cy="2" r="1.7" fill="#777"/></svg>
<svg style="left:1397px;top:746.5px" width="4" height="4" viewBox="0 0 4 4"><circle cx="2" cy="2" r="1.7" fill="#777"/></svg>
<svg style="left:1397px;top:752.5px" width="4" height="4" viewBox="0 0 4 4"><circle cx="2" cy="2" r="1.7" fill="#777"/></svg>
<div class="a" style="left:0px;top:1030px;width:1920px;height:50px;background:#3b3c40;"></div>
<div class="a" style="left:0px;top:1030px;width:60px;height:50px;background:#404346;"></div>
<svg style="left:19.5px;top:1045px" width="21" height="21" viewBox="0 0 21 21"><path d="M0,3 L9,1.7 L9,9.7 L0,9.7 Z M10,1.5 L21,0 L21,9.7 L10,9.7 Z M0,10.7 L9,10.7 L9,18.7 L0,17.5 Z M10,10.7 L21,10.7 L21,20.5 L10,19 Z" fill="#fff"/></svg>
<div class="a" style="left:60.75px;top:1030.5px;width:358px;height:49.5px;background:#333333;border:1px solid #4a4a4a;border-bottom:none"></div>
<svg style="left:75px;top:1045px" width="21" height="21" viewBox="0 0 21 21"><circle cx="12.5" cy="8.5" r="6.8" fill="none" stroke="#eee" stroke-width="1.6"/><path d="M7.5,13.5 L1,20" stroke="#eee" stroke-width="1.8"/></svg>
<div class="t" style="left:110.00px;top:1044.89px;font-size:19.42px;color:#e6e6e6;transform:scaleX(0.9541);transform-origin:0 0;">Type here to search</div>
<div class="a" style="left:325px;top:1035px;width:90px;height:39.3px;background:#1a2735;border-radius:5px"></div>
<div class="t" style="left:348.00px;top:1049.70px;font-size:11.59px;color:#2a7fd4;font-weight:700;transform:scaleX(1.0811);transform-origin:0 0;font-style:italic;">Amsted</div>
<div class="t" style="left:349.00px;top:1059.13px;font-size:4.35px;color:#2a7fd4;transform:scaleX(1.6700);transform-origin:0 0;">INDUSTRIES</div>
<svg style="left:405.5px;top:1035.5px" width="10" height="10" viewBox="0 0 10 10"><circle cx="5" cy="5" r="4.8" fill="#4fb3f0"/></svg>
<svg style="left:438.7px;top:1045px" width="22" height="20" viewBox="0 0 22 20"><rect x="1" y="4" width="14" height="12" fill="none" stroke="#eee" stroke-width="1.5"/><path d="M0,1.5 H16 M0,18.5 H16 M20,0 V4 M20,7 V13 M20,16 V20" stroke="#eee" stroke-width="1.5"/></svg>
<div class="a" style="left:488.75px;top:1077px;width:51.25px;height:3px;background:#76b9ed;"></div>
<div class="a" style="left:675px;top:1077px;width:51.25px;height:3px;background:#76b9ed;"></div>
<div class="a" style="left:985px;top:1077px;width:50.75px;height:3px;background:#76b9ed;"></div>
<div class="a" style="left:1109.25px;top:1077px;width:50.75px;height:3px;background:#76b9ed;"></div>
<div class="a" style="left:1166.25px;top:1077px;width:60.5px;height:3px;background:#76b9ed;"></div>
<div class="a" style="left:1166.25px;top:1030px;width:60.5px;height:47px;background:#5d5e62;"></div>
<svg style="left:500px;top:1042.5px" width="28" height="24" viewBox="0 0 28 24"><path d="M0,2 Q0,0 2,0 L10,0 L12,3 L26,3 L26,22 L0,22 Z" fill="#f5c04a"/><rect x="0" y="6" width="28" height="17" rx="1" fill="#ffd25e"/><path d="M8,23 L8,15 L20,15 L20,23 L17,23 L17,18 L11,18 L11,23 Z" fill="#2e86d8"/></svg>
<svg style="left:561px;top:1040px" width="29" height="28" viewBox="0 0 29 28"><circle cx="14.5" cy="14" r="10.5" fill="#1e9be6"/><circle cx="14.5" cy="14" r="6.5" fill="#3b3c40"/><rect x="7" y="12.5" width="15" height="3" fill="#1e9be6"/><rect x="14.5" y="16" width="9" height="4" fill="#3b3c40"/><path d="M2,24 Q0,18 14,8 Q26,0 28,3 Q29,8 20,14" fill="none" stroke="#f5c342" stroke-width="2.2"/></svg>
<svg style="left:623.75px;top:1040.5px" width="28" height="28" viewBox="0 0 28 28"><rect x="9" y="5" width="18" height="14" fill="#fff"/><path d="M9,5 L18,12 L27,5" fill="none" stroke="#1266c4" stroke-width="1.5"/><path d="M0,4 L14,0 L14,28 L0,24 Z" fill="#0a64c8"/><ellipse cx="7" cy="14" rx="3.5" ry="4.8" fill="none" stroke="#fff" stroke-width="2.2"/></svg>
<svg style="left:685px;top:1040px" width="30" height="30" viewBox="0 0 30 30"><circle cx="15" cy="15" r="14.5" fill="#db3d30"/><path d="M15,15 L2.4,22.3 A14.5,14.5 0 0 0 15,29.5 L22.3,22.3 Z" fill="#1e9e4f"/><path d="M15,15 L15,29.5 A14.5,14.5 0 0 0 27.6,7.8 L15,7.8 Z" fill="#f6c330"/><path d="M15,15 L27.6,7.8 A14.5 14.5 0 0 0 2.4,7.8 Z" fill="#db3d30"/><path d="M15,15 L2.4,7.8 A14.5,14.5 0 0 0 2.4,22.3 Z" fill="#1e9e4f"/><circle cx="15" cy="15" r="6.8" fill="#fff"/><circle cx="15" cy="15" r="5.3" fill="#3b7ce8"/></svg>
<svg style="left:747.5px;top:1040px" width="29" height="29" viewBox="0 0 29 29"><path d="M2,2 L16,0 L14,24 L0,26 Z" fill="#2a6fbf"/><path d="M6,8 L22,6 Q28,6 26,16 Q24,24 14,28 L12,12 Z" fill="#f5b21e"/><path d="M18,4 Q28,8 24,20" fill="none" stroke="#f08a0e" stroke-width="3"/></svg>
<svg style="left:808.75px;top:1040px" width="30" height="30" viewBox="0 0 30 30"><path d="M6,0 L29,0 L29,24 L24,29 L0,29 L0,6 Z" fill="#a4d22a"/><path d="M21,7 L11,7 L8,10 L8,20 L11,22 L21,22 L21,18 L13,18 L13,11 L21,11 Z" fill="#111"/></svg>
<svg style="left:871px;top:1040px" width="29" height="29" viewBox="0 0 29 29"><ellipse cx="13" cy="11" rx="12" ry="8.5" fill="#eee" stroke="#d33" stroke-width="2" transform="rotate(-15 13 11)"/><ellipse cx="13" cy="15" rx="11" ry="3" fill="#999"/><path d="M10,4 L20,24 M16,3 L12,20" stroke="#555" stroke-width="1.3"/><circle cx="21" cy="25" r="3" fill="none" stroke="#1e88e5" stroke-width="2"/><circle cx="12" cy="23" r="3" fill="none" stroke="#1e88e5" stroke-width="2"/></svg>
<svg style="left:933px;top:1040px" width="30" height="29" viewBox="0 0 30 29"><rect x="0" y="0" width="30" height="29" fill="#f7e9e6"/><path d="M5,26 L13,3 L18,3 L26,26 L21,26 L15.5,9 L10,26 Z M11,19 H20 V22 H11 Z" fill="#c41e22"/></svg>
<svg style="left:995px;top:1040px" width="30" height="30" viewBox="0 0 30 30"><rect x="0" y="0" width="30" height="30" fill="#dfe9f2"/><text x="2" y="13" font-family="Liberation Sans" font-size="12" font-weight="700" fill="#d42a2a">TL75</text><path d="M3,22 H27 M9,16 V28 M12,16 V28 M17,28 L21,16 M22,16 V28" stroke="#333" stroke-width="1"/></svg>
<svg style="left:1056px;top:1040px" width="32" height="31" viewBox="0 0 32 31"><circle cx="15.5" cy="15.5" r="15" fill="#1171c8"/><path d="M1,15 Q3,1 17,1 Q30,2 31,14 Q31,20 23,20 L12,20 Q12,26 20,27 Q12,31 6,27 Q0,22 1,15 Z" fill="#33b8e8"/><path d="M9,15 Q10,8 17,8 Q23,9 23,14 L9,15 Z" fill="#3b3c40"/><path d="M17,1 Q30,2 31,14 Q31,20 23,20" fill="#63d46b" opacity="0.8"/></svg>
<svg style="left:1120px;top:1040px" width="28" height="30" viewBox="0 0 28 30"><rect x="0" y="0" width="28" height="30" fill="#dfe9f2"/><text x="1" y="13" font-family="Liberation Sans" font-size="12" font-weight="700" fill="#d42a2a">TL75</text><text x="2" y="27" font-family="Liberation Sans" font-size="12" font-weight="700" fill="#222">EDU</text></svg>
<svg style="left:1181px;top:1040px" width="29" height="30" viewBox="0 0 29 30"><path d="M2,3 Q2,0 5,0 L22,0 L28,5 L28,29 L5,29 Q2,29 2,26 Z" fill="#f6760f"/><path d="M2,3 L6,0 L6,25 L2,22 Z" fill="#fb9b4c"/><rect x="6" y="21" width="22" height="8" fill="#9c3f0a"/><path d="M12,5 L20,5 L20,8 L15.5,8 L15.5,11 L19,11 L19,14 L15.5,14 L15.5,19 L12,19 Z" fill="#fff"/><text x="10" y="27.5" font-family="Liberation Sans" font-size="6" font-weight="700" fill="#f3c7a6">360</text></svg>
<svg style="left:1494.5px;top:1045.5px" width="31" height="19" viewBox="0 0 31 19"><defs><linearGradient id="cld" x1="0" y1="0" x2="0" y2="1"><stop offset="0" stop-color="#e6f2ff"/><stop offset="1" stop-color="#8fb6e6"/></linearGradient></defs><path d="M5,18.5 Q0,18.5 0,13.5 Q0,9 5,9 Q6,3 12,3 Q15,0 20,2 Q26,3 26,9 Q31,9.5 31,14 Q31,18.5 26,18.5 Z" fill="url(#cld)"/></svg>
<div class="t" style="left:1535.00px;top:1046.07px;font-size:19.86px;color:#eee;transform:scaleX(0.8553);transform-origin:0 0;">47°F</div>
<div class="t" style="left:1580.50px;top:1046.07px;font-size:19.86px;color:#eee;transform:scaleX(0.8907);transform-origin:0 0;">Cloudy</div>
<svg style="left:1657px;top:1051px" width="17" height="10" viewBox="0 0 17 10"><path d="M1,9 L8.5,1.5 L16,9" fill="none" stroke="#eee" stroke-width="1.4"/></svg>
<svg style="left:1685px;top:1048px" width="21" height="14" viewBox="0 0 21 14"><rect x="4.5" y="3.5" width="15" height="9" fill="none" stroke="#eee" stroke-width="1.2"/><rect x="6.5" y="5.5" width="11" height="5" fill="#eee"/><path d="M0,2 H4 M2,0 V4" stroke="#eee" stroke-width="1.2"/><rect x="19.5" y="6" width="1.5" height="4" fill="#eee"/></svg>
<svg style="left:1717.5px;top:1046.5px" width="17" height="17" viewBox="0 0 17 17"><path d="M1,16 Q1,1 16,1 M4.5,16 Q4.5,4.5 16,4.5 M8,16 Q8,8 16,8" fill="none" stroke="#bbb" stroke-width="1.1"/><circle cx="13" cy="14" r="1.7" fill="#eee"/></svg>
<svg style="left:1744.5px;top:1047px" width="21" height="17" viewBox="0 0 21 17"><path d="M1,5.5 H5 L10,1 V16 L5,11.5 H1 Z" fill="none" stroke="#eee" stroke-width="1.2"/><path d="M13,5 Q15,8.5 13,12 M16,3 Q19.5,8.5 16,14 M19,1 Q23,8.5 19,16" fill="none" stroke="#aaa" stroke-width="1.1"/></svg>
<div class="t" style="left:1783.00px;top:1035.11px;font-size:16.38px;color:#eee;transform:scaleX(0.8303);transform-origin:0 0;">10:45 PM</div>
<div class="t" style="left:1782.00px;top:1057.61px;font-size:16.38px;color:#eee;transform:scaleX(0.9293);transform-origin:0 0;">2/5/2023</div>
<svg style="left:1868.7px;top:1044px" width="31" height="30" viewBox="0 0 31 30"><path d="M0.5,0.5 H20 V16 H8 L4,20 L4,16 H0.5 Z" fill="#fff"/><path d="M4,5 H16 M4,9 H16 M4,13 H12" stroke="#444" stroke-width="1.2"/><circle cx="21.5" cy="20" r="8.5" fill="#3b3c40" stroke="#bbb" stroke-width="1.2"/><text x="17.3" y="25" font-family="Liberation Sans" font-size="13" font-weight="700" fill="#fff">4</text></svg>
<div class="a" style="left:1914px;top:1030px;width:1px;height:50px;background:#777;"></div>
</body></html>
